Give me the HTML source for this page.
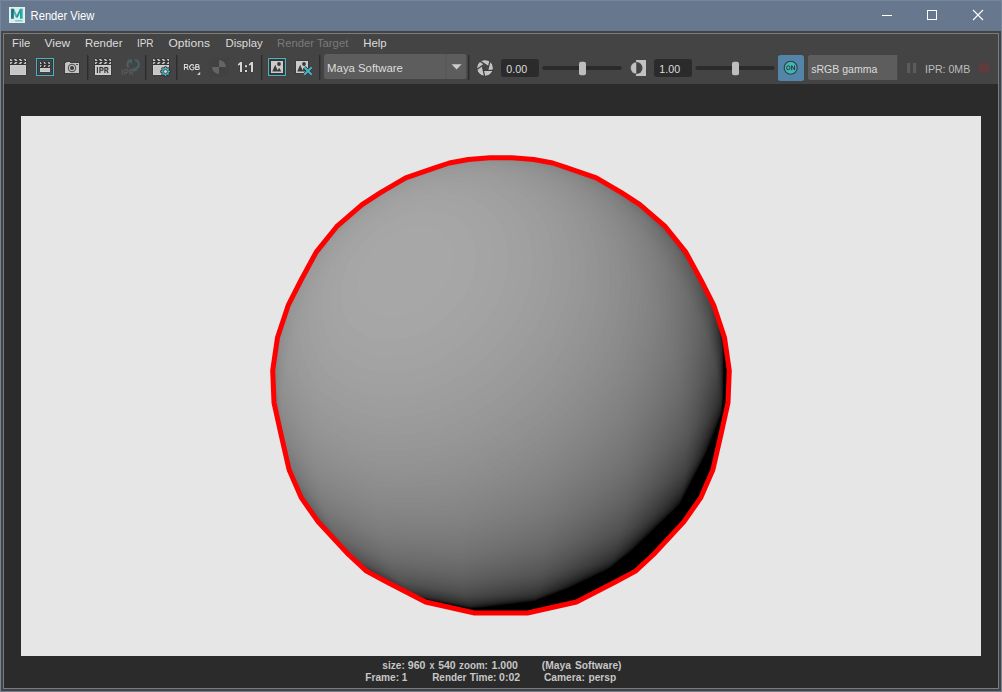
<!DOCTYPE html>
<html><head><meta charset="utf-8"><title>Render View</title>
<style>
html,body{margin:0;padding:0;}
body{width:1002px;height:692px;overflow:hidden;background:#67778d;font-family:"Liberation Sans",sans-serif;position:relative;}
.abs{position:absolute;}
#win{position:absolute;left:0;top:0;width:1002px;height:692px;background:#67778d;box-sizing:border-box;border:1px solid #75859c;border-bottom-color:#6c7c92;}
#client{position:absolute;left:1px;top:31px;width:1000px;height:660px;background:#444;}
#frame{position:absolute;left:3px;top:33px;width:996px;height:656px;box-sizing:border-box;border:1px solid #7b7b7b;background:#444;}
#view{position:absolute;left:4px;top:84px;width:994px;height:604px;background:#2b2b2b;}
</style></head><body>
<div id="win"></div>
<!-- title bar -->
<svg class="abs" style="left:9px;top:7px" width="16" height="16" viewBox="9 7 16 16">
<defs><linearGradient id="mg" x1="0" y1="0" x2="1" y2="0"><stop offset="0" stop-color="#12707a"/><stop offset="0.45" stop-color="#17868a"/><stop offset="1" stop-color="#27b6ae"/></linearGradient></defs>
<rect x="9" y="7" width="16" height="16" fill="#e8f6f4"/><rect x="9.6" y="7.6" width="14.8" height="14.8" fill="#dcebeb"/>
<path d="M11.1 18.8V8.8h2.8l3 6.4 3-6.4h2.8v10h-2.7v-5.8l-2.2 4.6h-1.8l-2.2-4.6v5.8z" fill="url(#mg)"/>
<path d="M13.9 8.8l3 6.4-.9 2.4-2.2-4.6z" fill="#9fcfd0" opacity="0.55"/>
<rect x="15.2" y="20.1" width="7.2" height="1.4" fill="#4dbfb7" opacity="0.75"/>
</svg>
<svg class="abs" style="left:880px;top:8px" width="110" height="16" viewBox="0 0 110 16" shape-rendering="crispEdges">
<rect x="2" y="7" width="10" height="1" fill="#fff"/>
<rect x="47.5" y="2.5" width="9" height="9" fill="none" stroke="#fff" stroke-width="1"/>
<path d="M93 2l10 10M103 2l-10 10" stroke="#fff" stroke-width="1.1" shape-rendering="geometricPrecision" fill="none"/>
</svg>
<div id="client"></div><div id="frame"></div>
<!-- menu -->
<!-- toolbar -->
<svg class="abs" style="left:0;top:0" width="1002" height="90" viewBox="0 0 1002 90" font-family="Liberation Sans, sans-serif">
<text x="30.6" y="19.8" font-size="12" fill="#ffffff" textLength="63.8" lengthAdjust="spacingAndGlyphs">Render View</text>
<text x="12.0" y="47.2" font-size="11" fill="#dcdcdc" textLength="18.2" lengthAdjust="spacingAndGlyphs">File</text>
<text x="44.5" y="47.2" font-size="11" fill="#dcdcdc" textLength="25.7" lengthAdjust="spacingAndGlyphs">View</text>
<text x="85.0" y="47.2" font-size="11" fill="#dcdcdc" textLength="37.5" lengthAdjust="spacingAndGlyphs">Render</text>
<text x="136.9" y="47.2" font-size="11" fill="#dcdcdc" textLength="16.7" lengthAdjust="spacingAndGlyphs">IPR</text>
<text x="168.5" y="47.2" font-size="11" fill="#dcdcdc" textLength="41.4" lengthAdjust="spacingAndGlyphs">Options</text>
<text x="225.5" y="47.2" font-size="11" fill="#dcdcdc" textLength="37.1" lengthAdjust="spacingAndGlyphs">Display</text>
<text x="277.0" y="47.2" font-size="11" fill="#7b7b7b" textLength="71.3" lengthAdjust="spacingAndGlyphs">Render Target</text>
<text x="363.2" y="47.2" font-size="11" fill="#dcdcdc" textLength="23.4" lengthAdjust="spacingAndGlyphs">Help</text>
<rect x="87" y="55" width="1.4" height="25" fill="#2d2d2d"/>
<rect x="145" y="55" width="1.4" height="25" fill="#2d2d2d"/>
<rect x="176" y="55" width="1.4" height="25" fill="#2d2d2d"/>
<rect x="261" y="55" width="1.4" height="25" fill="#2d2d2d"/>
<rect x="319" y="55" width="1.4" height="25" fill="#2d2d2d"/>
<rect x="468" y="55" width="1.4" height="25" fill="#2d2d2d"/>
<rect x="9.4" y="58.4" width="17.2" height="17.2" rx="0.8" fill="#343434"/><clipPath id="cl10_59"><rect x="10.0" y="59.0" width="16.0" height="6.0"/></clipPath><g clip-path="url(#cl10_59)" fill="#c6c6c6"><polygon points="3.90,59.00 6.20,59.00 7.80,61.00 5.50,61.00"/><polygon points="5.50,62.00 7.80,62.00 6.20,64.00 3.90,64.00"/><polygon points="8.80,59.00 11.10,59.00 12.70,61.00 10.40,61.00"/><polygon points="10.40,62.00 12.70,62.00 11.10,64.00 8.80,64.00"/><polygon points="13.70,59.00 16.00,59.00 17.60,61.00 15.30,61.00"/><polygon points="15.30,62.00 17.60,62.00 16.00,64.00 13.70,64.00"/><polygon points="18.60,59.00 20.90,59.00 22.50,61.00 20.20,61.00"/><polygon points="20.20,62.00 22.50,62.00 20.90,64.00 18.60,64.00"/><polygon points="23.50,59.00 25.80,59.00 27.40,61.00 25.10,61.00"/><polygon points="25.10,62.00 27.40,62.00 25.80,64.00 23.50,64.00"/><polygon points="28.40,59.00 30.70,59.00 32.30,61.00 30.00,61.00"/><polygon points="30.00,62.00 32.30,62.00 30.70,64.00 28.40,64.00"/></g><rect x="10.0" y="65.0" width="16.0" height="10.0" fill="#c6c6c6"/><rect x="10.4" y="65.4" width="15.2" height="9.2" fill="none" stroke="#d0d0d0" stroke-width="0.8"/>
<rect x="35.6" y="57.6" width="18.8" height="18.8" fill="#3f3838"/><rect x="36.5" y="58.5" width="17" height="17" fill="#464646" stroke="#46b4c6" stroke-width="1.1"/>
<rect x="37.5" y="59.5" width="15" height="15" fill="none" stroke="#3b3131" stroke-width="0.9"/>
<rect x="39.4" y="61.4" width="11.2" height="11.2" rx="0.8" fill="#343434"/><clipPath id="cl40_62"><rect x="40.0" y="62.0" width="10.0" height="6.0"/></clipPath><g clip-path="url(#cl40_62)" fill="#c6c6c6"><polygon points="35.00,62.00 36.44,62.00 37.44,64.00 36.00,64.00"/><polygon points="36.00,65.00 37.44,65.00 36.44,67.00 35.00,67.00"/><polygon points="39.25,62.00 40.69,62.00 41.69,64.00 40.25,64.00"/><polygon points="40.25,65.00 41.69,65.00 40.69,67.00 39.25,67.00"/><polygon points="43.50,62.00 44.94,62.00 45.94,64.00 44.50,64.00"/><polygon points="44.50,65.00 45.94,65.00 44.94,67.00 43.50,67.00"/><polygon points="47.75,62.00 49.19,62.00 50.19,64.00 48.75,64.00"/><polygon points="48.75,65.00 50.19,65.00 49.19,67.00 47.75,67.00"/><polygon points="52.00,62.00 53.44,62.00 54.44,64.00 53.00,64.00"/><polygon points="53.00,65.00 54.44,65.00 53.44,67.00 52.00,67.00"/></g><rect x="40.0" y="68.0" width="10.0" height="4.0" fill="#c6c6c6"/><rect x="40.4" y="68.4" width="9.2" height="3.2" fill="none" stroke="#d0d0d0" stroke-width="0.8"/>
<path d="M64.4 62.4h1.2v-1h5.2v1h8.8v11.2h-15.2z" fill="#343434"/>
<path d="M65 63h1.2v-1h4v1H79v10H65z" fill="#c4c4c4"/>
<circle cx="72" cy="68" r="3.8" fill="#c4c4c4" stroke="#3a3a3a" stroke-width="0.9"/><circle cx="72" cy="68" r="2" fill="#3c3c3c"/>
<rect x="76" y="64" width="2" height="1" rx="0.5" fill="#3a3a3a"/>
<rect x="94.4" y="58.4" width="17.2" height="17.2" rx="0.8" fill="#343434"/><clipPath id="cl95_59"><rect x="95.0" y="59.0" width="16.0" height="6.0"/></clipPath><g clip-path="url(#cl95_59)" fill="#c6c6c6"><polygon points="88.90,59.00 91.20,59.00 92.80,61.00 90.50,61.00"/><polygon points="90.50,62.00 92.80,62.00 91.20,64.00 88.90,64.00"/><polygon points="93.80,59.00 96.10,59.00 97.70,61.00 95.40,61.00"/><polygon points="95.40,62.00 97.70,62.00 96.10,64.00 93.80,64.00"/><polygon points="98.70,59.00 101.00,59.00 102.60,61.00 100.30,61.00"/><polygon points="100.30,62.00 102.60,62.00 101.00,64.00 98.70,64.00"/><polygon points="103.60,59.00 105.90,59.00 107.50,61.00 105.20,61.00"/><polygon points="105.20,62.00 107.50,62.00 105.90,64.00 103.60,64.00"/><polygon points="108.50,59.00 110.80,59.00 112.40,61.00 110.10,61.00"/><polygon points="110.10,62.00 112.40,62.00 110.80,64.00 108.50,64.00"/><polygon points="113.40,59.00 115.70,59.00 117.30,61.00 115.00,61.00"/><polygon points="115.00,62.00 117.30,62.00 115.70,64.00 113.40,64.00"/></g><rect x="95.0" y="65.0" width="16.0" height="10.0" fill="#c6c6c6"/><rect x="95.4" y="65.4" width="15.2" height="9.2" fill="none" stroke="#d0d0d0" stroke-width="0.8"/>
<g fill="none" stroke="#2c2c2c" stroke-width="1.05"><path d="M97.4 67.1V72.9M99.9 72.9V67.6h1.9a1.35 1.35 0 0 1 0 2.7h-1.9M104.9 72.9V67.6h1.8a1.3 1.3 0 0 1 0 2.6h-1.8M106.6 70.3l1.5 2.6"/></g>
<g fill="none" stroke="#486166" stroke-width="2.2"><path d="M128.6 67.5a3.6 3.8 0 0 1 1.6 -6.6"/><path d="M134.9 60.2a3.8 4 0 0 1 -0.3 8.6"/></g>
<path d="M127 59.4h5v4.6z" fill="#486166"/><path d="M132.4 67.2l5.2 3.6h-5.2z" fill="#486166" transform="translate(0.6,0.2)"/>
<g fill="none" stroke="#5b5b5b" stroke-width="1.05"><path d="M122.3 69.1V75M124.8 75V69.6h1.9a1.4 1.4 0 0 1 0 2.8h-1.9M129.9 75V69.6h1.8a1.35 1.35 0 0 1 0 2.7h-1.8M131.6 72.4l1.5 2.6"/></g>
<rect x="152.4" y="58.4" width="17.2" height="17.2" rx="0.8" fill="#343434"/><clipPath id="cl153_59"><rect x="153.0" y="59.0" width="16.0" height="6.0"/></clipPath><g clip-path="url(#cl153_59)" fill="#c6c6c6"><polygon points="146.90,59.00 149.20,59.00 150.80,61.00 148.50,61.00"/><polygon points="148.50,62.00 150.80,62.00 149.20,64.00 146.90,64.00"/><polygon points="151.80,59.00 154.10,59.00 155.70,61.00 153.40,61.00"/><polygon points="153.40,62.00 155.70,62.00 154.10,64.00 151.80,64.00"/><polygon points="156.70,59.00 159.00,59.00 160.60,61.00 158.30,61.00"/><polygon points="158.30,62.00 160.60,62.00 159.00,64.00 156.70,64.00"/><polygon points="161.60,59.00 163.90,59.00 165.50,61.00 163.20,61.00"/><polygon points="163.20,62.00 165.50,62.00 163.90,64.00 161.60,64.00"/><polygon points="166.50,59.00 168.80,59.00 170.40,61.00 168.10,61.00"/><polygon points="168.10,62.00 170.40,62.00 168.80,64.00 166.50,64.00"/><polygon points="171.40,59.00 173.70,59.00 175.30,61.00 173.00,61.00"/><polygon points="173.00,62.00 175.30,62.00 173.70,64.00 171.40,64.00"/></g><rect x="153.0" y="65.0" width="16.0" height="10.0" fill="#c6c6c6"/><rect x="153.4" y="65.4" width="15.2" height="9.2" fill="none" stroke="#d0d0d0" stroke-width="0.8"/>
<polygon points="165.06,67.02 165.94,67.02 166.46,68.34 167.06,68.59 168.35,68.02 168.98,68.65 168.41,69.94 168.66,70.54 169.98,71.06 169.98,71.94 168.66,72.46 168.41,73.06 168.98,74.35 168.35,74.98 167.06,74.41 166.46,74.66 165.94,75.98 165.06,75.98 164.54,74.66 163.94,74.41 162.65,74.98 162.02,74.35 162.59,73.06 162.34,72.46 161.02,71.94 161.02,71.06 162.34,70.54 162.59,69.94 162.02,68.65 162.65,68.02 163.94,68.59 164.54,68.34" fill="#42b4c6" stroke="#363030" stroke-width="1.6" stroke-linejoin="round" paint-order="stroke"/>
<circle cx="165.5" cy="71.5" r="1.9" fill="#dcdcdc" stroke="#3a3434" stroke-width="0.8"/>
<path d="M184.4 70V64.5h2.1a1.45 1.45 0 0 1 0 2.9h-2.1M186.6 67.5l1.8 2.5M193.8 65.6a2.3 2.65 0 1 0 .2 3.1V67.3h-1.9M195.7 64.5V69.5h2.3a1.3 1.3 0 0 0 0-2.6h-2.3M195.7 64.5h2.1a1.2 1.2 0 0 1 0 2.4" fill="none" stroke="#363636" stroke-width="2.2"/><path d="M184.4 70V64.5h2.1a1.45 1.45 0 0 1 0 2.9h-2.1M186.6 67.5l1.8 2.5M193.8 65.6a2.3 2.65 0 1 0 .2 3.1V67.3h-1.9M195.7 64.5V69.5h2.3a1.3 1.3 0 0 0 0-2.6h-2.3M195.7 64.5h2.1a1.2 1.2 0 0 1 0 2.4" fill="none" stroke="#dcdcdc" stroke-width="1.1"/>
<path d="M197 75h3.2v-3.2z" fill="#cfcfcf"/>
<rect x="209" y="57.5" width="20" height="19.5" fill="#424242"/><circle cx="219" cy="67" r="7" fill="#414141"/>
<path d="M219 67V60a7 7 0 0 1 7 7z" fill="#646464"/><path d="M219 67v7a7 7 0 0 1 -7 -7z" fill="#646464"/>
<g fill="#d6d6d6" stroke="#353535" stroke-width="0.7" paint-order="stroke"><path d="M237.9 64.3l2.3-2.3h1.8v10h-2v-7.3l-2.1 1z"/><path d="M248.9 64.3l2.3-2.3h1.8v10h-2v-7.3l-2.1 1z"/><rect x="245" y="65.2" width="2" height="2"/><rect x="245" y="70" width="2" height="2"/></g>
<rect x="267.5" y="57.5" width="19" height="19" fill="#3a3333"/><rect x="268.5" y="58.5" width="17" height="17" fill="#3b3333" stroke="#46b4c6" stroke-width="1.1"/>
<rect x="270.4" y="60.4" width="13.2" height="13.2" fill="#353535"/><rect x="271" y="61" width="12" height="12" fill="#cbcbcb"/><path d="M272.2 71.6L275.2 64.8L277.6 70.2L279.1 67.8L281.4 71.6z" fill="#3b3b3b"/><circle cx="279.0" cy="64.0" r="1.9" fill="#3b3b3b"/>
<rect x="295.4" y="60.4" width="13.2" height="13.2" fill="#353535"/><rect x="296" y="61" width="12" height="12" fill="#cbcbcb"/><path d="M297.2 71.6L300.2 64.8L302.6 70.2L304.1 67.8L306.4 71.6z" fill="#3b3b3b"/><circle cx="304.0" cy="64.0" r="1.9" fill="#3b3b3b"/>
<path d="M304.3 67.3l7.4 7.4M311.7 67.3l-7.4 7.4" stroke="#3a3232" stroke-width="3.4" fill="none"/>
<path d="M304.3 67.3l7.4 7.4M311.7 67.3l-7.4 7.4" stroke="#45b5c7" stroke-width="2" fill="none"/>
<rect x="324" y="54" width="142.4" height="25" rx="2.5" fill="#5d5d5d"/>
<rect x="445.4" y="54" width="1" height="25" fill="#555"/>
<path d="M451.6 64.2h10l-5 5.2z" fill="#cdcdcd"/>
<text x="327.1" y="71.6" font-size="11" fill="#dcdcdc" textLength="75.8" lengthAdjust="spacingAndGlyphs">Maya Software</text>
<circle cx="485" cy="68" r="8.3" fill="#c4c4c4" stroke="#3a3a3a" stroke-width="0.9"/>
<polygon points="3,-1.7 2.6,2.4 -1.85,2.5 -2.5,-1.4 -1.05,-3.4" transform="translate(485,68)" fill="#444"/>
<g transform="translate(485,68)" stroke="#3c3c3c" stroke-width="1.25" fill="none"><path d="M-4.7 -6.6L3 -1.7M4.9 -6.6L2.6 2.4M8.3 2.3L-1.85 2.5M-0.4 8.3L-2.5 -1.4M-8.25 1.5L-1.05 -3.4"/></g>
<rect x="501" y="59" width="38" height="18" rx="3" fill="#2b2b2b"/>
<text x="506.3" y="72.8" font-size="11" fill="#dcdcdc" textLength="20.8" lengthAdjust="spacingAndGlyphs">0.00</text>
<rect x="654" y="59" width="38" height="18" rx="3" fill="#2b2b2b"/>
<text x="659.3" y="72.8" font-size="11" fill="#dcdcdc" textLength="20.8" lengthAdjust="spacingAndGlyphs">1.00</text>
<rect x="542.2" y="66" width="79.6" height="4" rx="2" fill="#2b2b2b"/>
<rect x="579.0" y="61.8" width="7" height="13.4" rx="2" fill="#bebebe"/>
<rect x="695.4" y="66" width="79.2" height="4" rx="2" fill="#2b2b2b"/>
<rect x="732.0" y="61.8" width="7" height="13.4" rx="2" fill="#bebebe"/>
<rect x="636" y="60" width="10" height="16" fill="#c2c2c2"/>
<path d="M636.5 62a6 6 0 0 0 0 12z" fill="#c2c2c2" stroke="#444" stroke-width="0.5"/>
<path d="M636.5 62a6 6 0 0 1 0 12z" fill="#444"/>
<rect x="778" y="55" width="26" height="26" rx="2.5" fill="#5285a7"/>
<circle cx="790.7" cy="67.8" r="6.5" fill="#41b6b8" stroke="#353b3f" stroke-width="1.1"/>
<g fill="none" stroke="#2c393e" stroke-width="1"><ellipse cx="788.3" cy="67.8" rx="1.75" ry="1.95"/><path d="M791.7 70.2V65.6l2.9 4.4V65.4"/></g>
<path d="M810.5 55H897.3V80H810.5a2.5 2.5 0 0 1-2.5-2.5v-20a2.5 2.5 0 0 1 2.5-2.5z" fill="#5d5d5d"/>
<text x="811.2" y="72.8" font-size="11" fill="#dcdcdc" textLength="66.2" lengthAdjust="spacingAndGlyphs">sRGB gamma</text>
<rect x="907" y="63" width="3.2" height="10" fill="#5b5b5b"/><rect x="913" y="63" width="3.2" height="10" fill="#5b5b5b"/>
<text x="925" y="73" font-size="11" fill="#bdbdbd" textLength="45.2" lengthAdjust="spacingAndGlyphs">IPR: 0MB</text>
<rect x="979" y="63" width="10" height="10" fill="#5f3b3b"/>
</svg>
<div id="view"></div>
<svg class="abs" style="left:21px;top:116px" width="960" height="540" viewBox="0 0 960 540">
<rect width="960" height="540" fill="#e6e6e6"/>
<defs><clipPath id="sc"><polygon points="256.5,221.5 267.4,188.8 280.1,164.0 295.2,136.1 315.6,110.7 341.1,88.6 359.5,76.6 384.7,61.8 413.7,51.8 428.3,47.0 447.2,43.5 468.8,41.8 491.2,41.8 512.8,43.5 531.7,47.0 546.3,51.8 575.3,61.8 600.5,76.6 618.9,88.6 644.4,110.7 664.8,136.1 679.9,164.0 692.6,188.8 703.5,221.5 708.3,254.5 707.0,286.7 700.2,317.4 691.9,353.8 679.6,381.9 662.8,405.9 632.5,438.5 614.5,455.1 594.2,466.0 555.4,486.0 506.4,497.0 453.6,497.0 404.6,486.0 365.8,466.0 345.5,455.1 327.5,438.5 297.2,405.9 280.4,381.9 268.1,353.8 259.8,317.4 253.0,286.7 251.7,254.5"/></clipPath></defs>
<g clip-path="url(#sc)" shape-rendering="geometricPrecision">
<rect x="241" y="30" width="478" height="478" fill="#000000"/>
<path fill="#020202" d="M385.5 508l-6 0.4 -138 0.1 -1-1 0-477 1-1 477 0 1 1 -0.3 182 -0.7 1 -13 4.2 -1 0.5 -1.2 1.3 -0.1 1 1 2 -0.7 2 -0.4 57 -2.3 18 -14.5 37 -26.9 52 -1.9 2.2 -46 44.2 -21 17 -3 2.2 -38 18.1 -36 13.7 -53 6.5 -12 0.6 -42.3-8.5 -3.7-0.6 -2 0.3 -1-0.7 -1.3 1 -10.4 21z"/>
<path fill="#040404" d="M385.5 507.7l-1 0.5 -5 0.2 -138 0.1 -1-1 0-477 1-1 477 0 1 1 -0.1 165 -0.4 17 -0.5 0.8 -2 0.2 -1 0.8 -2 0.2 -1 0.8 -2 0.2 -1 0.8 -2 0.2 -1 0.8 -1.7 0.2 -1.8 2 -0.3 1 0.9 2 -0.9 59 -1.3 13 -1.2 6 -14.2 36 -26.9 52 -48.6 46.9 -22 17.7 -42 20.1 -32 12.1 -4 0.8 -5.6 0.4 -2.4 0.6 -5.9 0.4 -3.1 0.7 -5.2 0.3 -2.8 0.7 -5.5 0.3 -2.5 0.6 -5.8 0.4 -12.2 1.7 -10 0.5 -3-0.4 -43.7-8.8 -2.3 0.2 -1-0.4 -1.7 1.2 -10.4 21z"/>
<path fill="#050505" d="M384.5 508.1l-143 0.3 -0.9-0.9 -0.1-477 1-1 477 0.1 0.9 0.9 0 165 -0.1 13 -0.4 4 -0.4 0.5 -2 0.3 -1 0.7 -2 0.3 -1 0.7 -2 0.3 -1 0.7 -2 0.3 -1 0.7 -2 0.3 -1.8 2.2 -0.2 1.4 0.7 1.6 0 7 -0.7 52 -1.3 13 -0.7 2.4 -0.2 2.6 -14.1 36 -27.4 53 -48.3 46.6 -21 16.9 -3 2 -38 18.1 -34 13.1 -55 6.8 -10 0.4 -3-0.2 -42.5-8.7 -4.5-0.4 -2 1.4 -10.3 21z"/>
<path fill="#070707" d="M384.5 508l-7 0.3 -136 0.1 -0.9-0.9 -0.1-477 1-1 477 0.1 0.9 0.9 0 162 -0.2 16 -0.3 3 -0.4 1.3 -2 0.2 -1 0.8 -2 0.2 -1 0.8 -2 0.2 -1 0.8 -2 0.2 -1 0.8 -2 0.3 -2.1 2.4 0.7 9 -0.7 53 -1.4 13 -0.8 5 -14.2 36 -27.4 53 -48.1 46.4 -20 16.2 -4 2.7 -38 18.1 -35 13.3 -55 6.7 -11 0.3 -42.8-8.7 -5.2-0.7 -2.2 1.7 -10.2 21z"/>
<path fill="#080808" d="M384.5 507.9l-7 0.4 -136 0.1 -0.9-0.9 0-477 0.9-0.9 477 0 0.9 0.9 -0.1 162 -0.1 16 -0.4 3 -0.3 1 -2 0.3 -1 0.7 -2 0.3 -1 0.7 -2 0.3 -1 0.7 -2 0.3 -1 0.7 -2 0.3 -2.2 2.7 0.6 9 -0.6 53 -2.3 18 -14.1 36 -27.4 52.8 -48 46.4 -20 16.2 -3 2.2 -40 19 -34 13 -56 6.7 -9 0.4 -49-9.6 -2.4 1.9 -10.2 21z"/>
<path fill="#0a0a0a" d="M384.5 507.8l-7 0.5 -136 0.1 -0.9-0.9 0-477 0.9-0.9 477 0 0.9 0.9 -0.1 162 -0.2 16 -0.5 3 -0.1 0.5 -1 0.4 -13 4.2 -2.3 2.9 0.6 9 -0.6 53 -2.3 18 -14.2 36 -27.2 52.6 -48 46.4 -22 17.7 -41 19.8 -34 13 -49 6 -12 1 -4 0.1 -49-9.6 -2.5 2 -10.3 21z"/>
<path fill="#0b0b0b" d="M384.5 507.7l-2 0.4 -5 0.1 -136 0.2 -0.9-0.9 0-477 0.9-0.9 477 0 0.9 0.9 -0.4 178 -0.5 2.8 -2 0.3 -1.5 0.9 -1.5 0.1 -1.5 0.9 -1.5 0.1 -1.5 0.9 -1.5 0.1 -1.5 0.9 -1.5 0.1 -2.4 3.9 0.5 9 -0.5 53 -2.4 18 -14.6 37 -26.6 51.4 -48.2 46.6 -21.8 17.6 -41 19.7 -34 13.1 -49 5.9 -13 1.2 -3 0 -49-9.6 -1.8 1.1 -0.9 1 -10.3 21z"/>
<path fill="#0d0d0d" d="M384.5 507.6l-2 0.5 -5 0.1 -136 0.1 -0.8-0.8 -0.1-477 0.9-0.9 477 0 0.9 0.9 -0.1 151 -0.3 27 -0.5 1.8 -1 0.6 -14 4.4 -1 1.2 0.6 1 -1.1 2 0 1 0.5 8 -0.5 53 -2.1 17 -14.9 38 -26.5 51.1 -2.6 2.9 -45.8 44 -21.6 17.4 -41 19.8 -34 13 -49 6 -13 1.2 -3 0 -49-9.6 -2.1 1.2 -0.8 1 -10.4 21z"/>
<path fill="#0e0e0e" d="M383.5 507.8l-6 0.4 -33-0.3 -103 0.4 -0.8-0.8 -0.1-477 0.9-0.9 477 0.1 0.8 0.8 0 151 -0.4 27 -0.4 1.4 -1 0.5 -1.2 0.1 -1.8 0.9 -1.2 0.1 -1.8 0.9 -1.2 0.1 -1.8 0.9 -4.2 1.1 -0.8 0.4 -1.4 1.6 0.6 1 -0.8 2 0.5 10 -0.4 52 -2.2 17 -15 38 -26.3 50.9 -2.8 3.1 -45.8 44 -21.4 17.3 -41 19.8 -34 13 -49 6 -13 1.2 -3 0 -49-9.6 -2.5 1.3 -11.1 22 -1.4 2z"/>
<path fill="#101010" d="M383.5 507.7l-6 0.4 -33-0.2 -4 0.3 -99 0.1 -0.8-0.8 -0.1-477 0.9-0.9 477 0.1 0.8 0.8 -0.1 151 -0.4 27 -0.3 1 -1 0.7 -2 0.3 -1 0.7 -2 0.3 -1 0.7 -2 0.3 -1 0.7 -2 0.3 -1 0.7 -2 0.3 -1.7 2 0.4 1 -0.4 2 0.5 10 -0.4 52 -2.3 17 -14.9 38 -26.2 50.7 -2.9 3.3 -45.8 44 -21.3 17.2 -41.2 19.8 -33.8 13 -50 6.1 -13 1.1 -2 0 -49-9.6 -2.9 1.4 -11.1 22 -1.2 2z"/>
<path fill="#111111" d="M383.5 507.7l-6 0.4 -33-0.3 -4 0.3 -99 0.2 -0.8-0.8 -0.1-477 0.9-0.9 477 0.1 0.8 0.8 -0.1 151 -0.4 27 -0.3 0.8 -1 0.8 -2 0.2 -1 0.8 -2 0.2 -1 0.8 -2 0.2 -1 0.8 -2 0.2 -1 0.8 -2 0.2 -2 2.2 0.4 2 -0.2 1 0.5 10 -0.4 51 -1 10 -1.3 8 -14.9 38 -26.1 50.4 -3.1 3.6 -45.8 44 -21.1 17 -41.5 20 -33.5 12.9 -50.3 6.1 -12.7 1.1 -6-0.8 -43-8.5 -2-0.3 -2 0.5 -1.3 1 -11 22 -1.2 2z"/>
<path fill="#131313" d="M383.5 507.6l-6 0.5 -33-0.3 -4 0.3 -99 0.2 -0.8-0.8 -0.1-477 0.9-0.9 477 0.1 0.8 0.8 -0.1 151 -0.5 27 -1.2 1.4 -2 0.2 -1 0.8 -2 0.2 -1 0.8 -2 0.2 -1 0.8 -2 0.2 -1 0.8 -2 0.2 -2.1 2.4 0.7 13 -0.4 51 -0.9 10 -1.3 7.7 -15 38.2 -26 50.3 -3.3 3.8 -44.7 43 -21 17.1 -3 2 -39.9 18.9 -33.1 12.7 -51.4 6.3 -11.6 1.1 -6-0.8 -43-8.6 -2-0.2 -2 0.2 -1.6 1.3 -10.5 21z"/>
<path fill="#141414" d="M383.5 507.5l-6 0.5 -33-0.3 -4 0.4 -87 0.2 -12 0 -0.8-0.8 -0.1-477 0.9-0.9 477 0.1 0.8 0.8 -0.1 151 -0.5 27 -1.2 1.2 -2 0.3 -1 0.7 -2 0.3 -1 0.7 -2 0.3 -1 0.7 -2 0.3 -1 0.7 -2 0.3 -2.3 2.5 0.8 13 -0.4 51 -0.8 9 -1.3 8.2 -15 38.4 -26 50.3 -4.6 5.1 -43.7 42 -20.7 17 -3.2 2 -40 19 -32.8 12.6 -52.4 6.4 -10.6 0.9 -6-0.7 -43-8.5 -4-0.2 -1.9 1.5 -10.3 21z"/>
<path fill="#161616" d="M382.5 507.8l-141 0.4 -0.7-0.7 -0.2-477 0.9-0.9 477 0.1 0.8 0.8 -0.2 151 -0.5 27 -1.1 1 -2 0.3 -1 0.7 -2 0.3 -1 0.7 -2 0.3 -1 0.7 -2 0.3 -1 0.7 -2 0.3 -2.4 2.7 0.9 13 -0.4 51 -0.9 9 -1.2 7.6 -15 38.6 -26 50.4 -5.8 6.4 -43.8 42 -19.4 15.8 -3.5 2.2 -40.1 19 -32.4 12.5 -53.5 6.5 -9.5 0.8 -6-0.7 -42-8.3 -5-0.6 -2.1 1.8 -11.3 23 -0.7 1z"/>
<path fill="#171717" d="M382.5 507.7l-8 0.3 -30-0.4 -4 0.4 -99 0.2 -0.7-0.7 -0.1-477 0.8-0.8 477 0.1 0.7 0.7 -0.1 151 -0.6 27 -1.7 1 -1.3 0.1 -1.7 0.9 -1.3 0.1 -1.7 0.9 -1.3 0.1 -1.7 0.9 -4.3 1.1 -2.5 2.9 0.9 13 -0.4 51 -0.8 9 -1.2 7 -1 3.3 -15 37.8 -25 48.2 -6 6.7 -43.8 42 -18.4 15 -4.7 3 -40.1 19 -32 12.3 -54.8 6.7 -8.2 0.7 -6-0.7 -42-8.3 -5-0.7 -2.3 2 -11.2 23 -0.8 1z"/>
<path fill="#191919" d="M382.5 507.7l-8 0.3 -30-0.4 -4 0.4 -99 0.2 -0.7-0.7 -0.1-477 0.8-0.8 477 0.1 0.7 0.7 -0.1 151 -0.6 26.7 -15 5 -1 0.7 -1.7 2.6 1 13 -0.4 51 -0.8 9 -1.1 6.5 -1 3.4 -15 37.9 -25 48.2 -6.3 7 -43.7 42 -19 15.5 -4.3 2.5 -42.4 20 -29.3 11.2 -63 7.4 -5.5-0.6 -47.5-9.1 -2.4 2.1 -11.3 23z"/>
<path fill="#1a1a1a" d="M382.5 507.6l-8 0.3 -25-0.4 8.2-17 0.8-1 0.2-1 0.8-1 0.2-1 0.8-1 0.2-1 0.8-1 0.2-1 0.8-1 0.2-1 0.8-1 0.2-1 0.8-1 0.2-1 0.8-1 0.2-1 0.8-1 0-1.2 -2 2.1 -0.2 1.1 -1.8 1.9 -0.2 1.1 -1.8 1.9 -0.2 1.1 -1.8 1.9 -0.2 1.1 -1.8 1.9 -1.2 3.1 -1.8 1.9 -1.2 3.1 -1.8 1.9 -1.2 3.1 -1.8 1.9 -1.2 3.1 -1.8 1.9 -0.2 1.1 -3.8 0.5 -87 0.2 -12 0 -0.7-0.7 -0.1-477 0.8-0.8 477 0.1 0.7 0.7 -0.1 151 -0.6 25.9 -2 1 -2 0.3 -1 0.7 -2 0.3 -1 0.7 -2 0.3 -1 0.7 -2 0.3 -1 0.7 -1.3 0.1 -1.1 1 -1.4 3 1 13 -0.4 51 -0.8 9 -1 6 -1 3.4 -15 38 -25 48.2 -6.6 7.4 -43.7 42 -18.7 15.3 -4.8 2.7 -42.3 20 -28.9 11.1 -63 7.3 -5-0.4 -48-9.2 -2.6 2.2 -11.2 23z"/>
<path fill="#1c1c1c" d="M382.5 507.6l-8 0.3 -23.9-0.4 18-36 0.6-2 -0.7-0.1 -4.1 4.1 -2.4 4 -1.6 2 -0.4 1 -3.6 5 -1.4 3 -1.6 2 -1.4 3 -1.6 2 -1.4 3 -1.6 2 -1.4 3 -1.7 2 -1 2 -2.8 0.4 -87 0.3 -12 0 -0.7-0.7 -0.1-477 0.8-0.8 477 0.1 0.7 0.7 -0.1 151 -0.6 24.9 -5 2 -1.4 0.1 -1.6 0.9 -1.4 0.1 -1.6 0.9 -1.4 0.1 -1.6 0.9 -1.3 0.1 -2.1 2 -0.5 3 1 14 -0.4 50 -0.7 8.5 -1 5.9 -1 3.5 -15 38.1 -22 43 -3 5.3 -6.9 7.7 -43.7 42 -18.4 15.1 -3.2 1.9 -44.3 21 -28.5 10.9 -50 6.1 -14 1.4 -3.5-0.4 -48.5-9.3 -2.7 2.3 -11.3 23z"/>
<path fill="#1d1d1d" d="M382.5 507.5l-8 0.4 -23.3-0.4 18-36 0.6-2 -0.3-0.5 -1 0.1 -4.4 4.4 -8 12 -2 4 -1 1 -2 4 -1 1 -7 12 -2.6 0.4 -87 0.3 -12 0 -0.7-0.7 -0.1-477 0.8-0.8 477 0.1 0.7 0.7 -0.2 151 -0.5 24.6 -1 0.2 -1 0.7 -2 0.3 -1 0.7 -2 0.3 -1 0.7 -2 0.3 -1 0.7 -2 0.3 -1 0.7 -2 0.3 -2 2.2 1.1 17 -0.5 50 -0.6 7.9 -1 5.8 -1 3.6 -16 40.5 -21 40.8 -3 5.2 -7.2 8.2 -44.8 43 -17 13.9 -48 23.1 -28 10.7 -64 7.6 -8.2-1.3 -43.8-8.4 -2 1.3 -0.9 1.1z"/>
<path fill="#1f1f1f" d="M381.5 507.6l-29.4-0.1 18-36 0.3-1 -0.9-2 -1 0.3 -4.6 4.7 -8 12 -1.5 3 -1.5 2 -1.5 3 -1.5 2 -1.5 3 -1.5 2 -4.1 7 -2.3 0.4 -87 0.2 -12 0 -0.6-0.6 -0.2-477 0.8-0.8 477 0.1 0.7 0.7 -0.1 128 -0.6 47.3 -1 0.1 -1 0.8 -2 0.2 -1 0.8 -2 0.2 -1 0.8 -2 0.2 -1 0.8 -2 0.2 -1 0.8 -2 0.2 -2.2 2.6 1.1 15 0 9 -0.5 44 -0.4 6.2 -1 5.8 -1 3.7 -16 40.6 -21 41 -3 5.1 -8.6 9.6 -42.7 41 -5.5 5 -11.2 8.9 -3.3 2.1 -46.3 22 -27.4 10.5 -64 7.6 -7.5-1.1 -44.5-8.5 -2.5 1.5 -12.5 24.9z"/>
<path fill="#202020" d="M381.5 507.6l-7 0.2 -21.1-0.3 17.8-35 0.4-2 -2.1-2.2 -1 0.3 -4.9 4.9 -2.3 4 -1.7 2 -0.3 1 -1.7 2 -0.3 1 -1.7 2 -1.3 3 -1.7 2 -1.3 3 -1.7 2 -1.3 3 -1.7 2 -1.3 3 -1.7 2 -1 2 -2.1 0.3 -87 0.3 -12 0 -0.6-0.6 -0.2-477 0.8-0.8 477 0.2 0.6 0.6 0 128 -0.6 47 -7 2.1 -1.8 0.9 -1.2 0.1 -1.8 0.9 -1.2 0.1 -1.8 0.9 -1.2 0.1 -2.4 2.9 1.2 15 0 6 -0.5 47 -0.3 5.5 -1 5.8 -1 3.8 -17 42.9 -22 42.5 -7.1 8.5 -4.9 5 -42.8 41 -13.3 11 -4.8 3 -46.3 22 -14.9 6 -11.9 4.3 -64 7.7 -12.2-2 -39.8-7.6 -2.9 1.6 -12.1 24.2 -0.5 0.8z"/>
<path fill="#222222" d="M381.5 507.5l-7 0.3 -18.7-0.3 17-34 0.5-2 -2.2-2 -0.6-0.1 -1-1.4 -1 0.4 -5 5.1 -0.3 1 -3.7 5 -0.3 1 -1.8 2 -0.2 1 -1.8 2 -1.2 3 -1.8 2 -1.2 3 -1.8 2 -1.2 3 -1.8 2 -1.2 3 -1.8 2 -1 2 -1.9 0.3 -87 0.3 -12 0 -0.6-0.6 -0.2-477 0.8-0.8 477 0.2 0.6 0.6 -0.1 128 -0.5 45.9 -1.6 0.1 -1.4 0.9 -1.6 0.1 -1.4 0.9 -1.6 0.1 -1.4 0.9 -1.6 0.1 -1.4 0.9 -1.6 0.1 -1.4 0.9 -1.5 0.1 -0.9 1 -1.3 3 1.2 14 0.2 7 -0.5 47 -0.2 4.6 -1 6 -1 3.8 -17 43.1 -22 42.5 -8.5 10 -5 5 -41.6 40 -13.3 11 -5.2 3 -48.4 23 -23.4 9 -64.6 7.8 -6.1-0.8 -45.9-8.7 -2 0.6 -1.4 1.1z"/>
<path fill="#232323" d="M380.5 507.6l-22.4-0.1 16.8-33 0.4-2 -3.8-3.1 -1-0.2 -1-1.4 -1 0.5 -5.1 5.2 -0.3 1 -1.8 2 -0.2 1 -1.8 2 -0.2 1 -1.8 2 -0.2 1 -1.8 2 -1.2 3 -1.8 2 -1.2 3 -1.8 2 -1.2 3 -1.8 2 -1.2 3 -1.8 2 -1 2 -1.8 0.3 -87 0.3 -12 0 -0.6-0.6 -0.2-477 0.8-0.8 477 0.2 0.6 0.6 -0.1 128 -0.5 44.8 -2 0.2 -1 0.8 -2 0.2 -1 0.8 -2 0.2 -1 0.8 -2 0.2 -1 0.8 -2 0.2 -1 0.8 -1.9 0.2 -1.7 2 -0.3 3 1.3 14 0.2 7 -0.5 47 -1.1 9.9 -1 3.7 -18 45.5 -21 40.4 -8.9 10.5 -5 5 -42.7 41 -12.2 10 -3.4 2 -50.5 24 -20.3 8 -3 0.9 -64 7.7 -10.9-1.6 -39.1-7.5 -2-0.3 -2 0.3 -1.9 1.5 -12.3 25z"/>
<path fill="#252525" d="M380.5 507.6l-19.3-0.1 16.2-33 0.1-1 -1-0.5 -3-2.6 -1-0.1 -1-1.2 -1 0 -1-1.5 -1 0.6 -5.3 5.3 -0.2 1 -1.8 2 -0.2 1 -1.8 2 -0.2 1 -1.8 2 -0.2 1 -1.8 2 -1.2 3 -1.8 2 -1.2 3 -1.8 2 -1.2 3 -1.8 2 -1.2 3 -1.8 2 -1 2 -88.7 0.6 -12 0 -0.6-0.6 -0.2-477 0.8-0.8 477 0.2 0.6 0.6 -0.1 128 -0.5 44.3 -2 0.3 -1 0.7 -2 0.3 -1 0.7 -2 0.3 -1 0.7 -2 0.3 -1 0.7 -2 0.3 -1 0.7 -2 0.3 -2.1 2.4 1.6 23 -0.5 48 -1 9.3 -1 3.6 -18 45.6 -21 40.4 -13.3 15.1 -43.7 42 -11 9.1 -5 2.9 -50.4 24 -21.6 8.4 -65 7.9 -4.3-0.3 -44.7-8.4 -5-0.5 -2.2 1.9 -12.3 25z"/>
<path fill="#262626" d="M380.5 507.5l-14.5 0 15-30 0.2-1 -1.7-2.2 -3-1.9 -1-1 -1-0.1 -1-1.2 -1 0 -1-1.3 -1 0.1 -1-1.5 -6.4 6.1 -0.2 1 -1.8 2 -0.2 1 -1.8 2 -0.2 1 -1.8 2 -0.2 1 -1.8 2 -1.2 3 -1.8 2 -1.2 3 -1.8 2 -1.2 3 -1.8 2 -1.2 3 -1.8 2 -0.2 1 -0.8 1 -88.6 0.6 -12-0.1 -0.5-0.5 -0.2-477 0.7-0.7 477 0.1 0.6 0.6 -0.1 128 -0.5 43.7 -2 0.4 -1.7 0.9 -1.3 0.1 -1.7 0.9 -1.3 0.1 -1.7 0.9 -1.3 0.1 -1.7 0.9 -1.3 0.1 -1.7 0.9 -1.3 0.1 -2.4 2.9 1.7 23 -0.4 47 -0.9 9.7 -1 3.4 -19 47.9 -20 38.3 -13.8 15.7 -44.8 43 -9.4 7.8 -3.7 2.2 -52.5 25 -20.8 8.2 -66 8 -19.2-3.2 -28.8-5.6 -5-0.5 -2.5 2.1z"/>
<path fill="#282828" d="M379.5 507.6l-9.1-0.1 14.8-30 -5.7-4 -1-0.1 -1-1.1 -1-0.1 -1-1.1 -1 0 -1-1.3 -1 0.2 -1-1.4 -1 0.2 -1-1.5 -1 0.6 -5.5 5.6 -0.2 1 -1.8 2 -0.2 1 -1.8 2 -0.2 1 -1.8 2 -0.2 1 -1.8 2 -1.2 3 -1.8 2 -1.2 3 -1.8 2 -1.2 3 -1.8 2 -1.2 3 -1.8 2 -0.2 1 -0.8 1 -88.5 0.5 -12 0 -0.5-0.5 -0.2-477 0.7-0.7 477 0.1 0.6 0.6 -0.1 128 -0.5 41.9 -1 0.6 -2 0.4 -1 0.6 -2 0.4 -1 0.6 -2 0.4 -1 0.6 -8 2.4 -1 1.1 0.2 1 -0.9 2 1.7 17.4 0.2 6.6 -0.4 46 -0.8 8.9 -2 5.9 -18 45.6 -17 33.2 -3 5.1 -15.3 17.3 -43.8 42 -8.9 7.5 -4.5 2.5 -52.5 25 -6.9 3 -13.1 4.9 -66 8.1 -53-9.3 -2.8 2.3 -12.2 24.8z"/>
<path fill="#292929" d="M379.5 507.5l-8.5 0 14.8-30 -0.3-1 -1-0.1 -1-1 -1-0.1 -1-0.9 -1-0.1 -1-1.1 -1 0 -1-1.2 -1 0 -1-1.2 -1 0.1 -1-1.4 -1 0.3 -0.9-1.3 -1.1 0.1 -1-1.4 -1 0.6 -5.6 5.7 -0.2 1 -1.8 2 -0.2 1 -1.8 2 -0.2 1 -1.8 2 -0.2 1 -1.8 2 -1.2 3 -1.8 2 -1.2 3 -1.8 2 -1.2 3 -1.8 2 -1.2 3 -1.8 2 -0.3 1 -0.7 1 -10.9 0 22.5-44.9 0-1.1 -4.1 4 -0.2 1 -1.8 2 -0.2 1 -1.8 2 -0.2 1 -3.8 5 -1.2 3 -1.8 2 -1.2 3 -1.8 2 -1.2 3 -1.8 2 -1.2 3 -1.8 2 -1.2 3 -1.8 2 -1.2 3 -1.8 2 -69.9 0.5 -12 0 -0.5-0.5 -0.2-477 0.7-0.7 477 0.2 0.5 0.5 0 128 -0.5 40.8 -1 0.8 -2 0.2 -1 0.8 -2 0.2 -1 0.8 -2 0.2 -1 0.8 -2 0.2 -1 0.8 -2 0.2 -1 0.8 -2 0.3 -1.9 2.1 0 4 2 22 -0.5 47 -0.6 8 -2 5.9 -19 48 -18 34.7 -16.8 19.4 -43.8 42 -8.2 7 -3.5 2 -54.6 26 -6.8 3 -12.3 4.6 -66 8.1 -17.1-2.7 -35.9-6.5 -2 0.9 -1.3 1.6z"/>
<path fill="#2b2b2b" d="M378.5 507.5l-7 0 14-28 0.7-2 -0.7-1.4 -1 0 -1-1 -1 0 -1-1.1 -1 0.1 -1-1.3 -1 0.2 -1-1.3 -1 0.1 -1-1.3 -1 0.2 -1-1.3 -1 0.2 -0.7-1.1 -1.3-0.1 -1-1.3 -1 0.6 -5.7 5.8 -0.2 1 -1.8 2 -0.2 1 -1.8 2 -0.2 1 -1.8 2 -0.2 1 -1.8 2 -1.2 3 -1.8 2 -1.2 3 -1.8 2 -1.2 3 -1.8 2 -1.3 3 -1.8 2 -0.2 1 -0.8 1 -9.6 0 22-44 0.7-2 -0.3-0.9 -1 0.3 -4.6 4.6 -8 12 -10.5 18 -1.5 2 -1.5 3 -4.5 7 -69.4 0.5 -12 0 -0.5-0.5 -0.2-477 0.7-0.7 477 0.2 0.5 0.5 -0.1 125 -0.4 43.3 -1 0.8 -2 0.2 -1 0.8 -2 0.2 -1 0.8 -2 0.2 -1 0.8 -2 0.2 -1 0.8 -2 0.2 -1 0.8 -2 0.2 -2.3 2.7 2.3 26 -0.5 46 -0.5 7.7 -2 6.2 -19 48.2 -18 34.8 -17.4 20.1 -43.7 42 -6.9 6 -3.2 2 -58.7 28 -16.1 6.3 -66 8.1 -15.7-2.4 -37.3-6.7 -2 0.5 -1.7 1.2 -12.4 25z"/>
<path fill="#2c2c2c" d="M377.5 507.5l-4.7 0 14.5-29 -1.8-2.7 -1 0.1 -1-1.2 -1 0.2 -1-1.2 -1 0.2 -1-1.4 -1 0.3 -1-1.4 -1 0.3 -1-1.3 -1 0.2 -1-1.3 -1 0.1 -0.6-0.9 -1.4-0.3 -1-1.2 -1 0.6 -5.8 5.9 -0.2 1 -1.8 2 -0.2 1 -1.8 2 -0.2 1 -3.8 5 -1.3 3 -1.7 2 -1.3 3 -1.7 2 -1.3 3 -1.7 2 -1.2 2.7 -1.9 2.3 -1 2 -8.2 0 22-44 0.4-1 -1.3-2.4 -1 0.3 -5 5.1 -0.3 1 -3.7 5 -0.3 1 -1.7 2 -0.3 1 -1.8 2 -1.2 3 -1.8 2 -1.2 3 -1.8 2 -1.2 3 -1.8 2 -1.2 3 -1.8 2 -1.2 3 -1.8 2 -1.2 3 -1.8 2 -68.9 0.5 -12 0 -0.5-0.5 -0.2-477 0.7-0.7 477 0.2 0.5 0.5 -0.1 125 -0.4 42.1 -1.7 0.9 -1.3 0.1 -1.7 0.9 -1.3 0.1 -1.7 0.9 -1.3 0.1 -1.7 0.9 -1.3 0.1 -1.7 0.9 -4.3 1.1 -1 0.9 -1.6 3 2.4 27 -0.8 51.1 -2 6.8 -20 50.7 -17 32.6 -18 20.8 -44.8 43 -5.2 4.6 -4.1 2.4 -58.8 28 -6.8 3 -8.3 3 -66 8.1 -26-4.1 -25-4.6 -4-0.2 -1.6 0.8 -1 1 -12.2 25z"/>
<path fill="#2e2e2e" d="M375.5 507.5l-1 0 1.8-3 0.2-1.1 0.8-0.9 0.2-1.1 0.8-0.9 0.2-1.1 0.8-0.9 0.2-1.1 0.8-0.9 0.2-1.1 0.8-0.9 0.2-1.1 0.8-0.9 0.2-1.1 0.8-0.9 0.2-1.1 0.8-0.9 0.2-1.1 0.8-0.9 0.2-1.1 0.8-0.9 0.2-1.1 0.8-0.9 0.2-1.1 0.8-0.9 0.1-1 -0.9-2.1 -1-0.3 -1-1.6 -1 0.2 -1-1.3 -1 0.3 -1-1.3 -1 0.2 -1-1.2 -1 0.2 -1-1.3 -1 0.2 -1-1.3 -1 0.1 -1-1.1 -1 0 -1-1.1 -1-0.1 -1-1.1 -2.1 1.6 -4.8 5 -8 12 -1.5 3 -1.5 2 -1.5 3 -1.5 2 -1.5 3 -1 1 -4.6 8 -6.6 0 21.9-44 0.2-1 -0.5-1 -1-0.3 -1-1.5 -1 0.5 -5.3 5.3 -0.2 1 -1.8 2 -0.2 1 -1.8 2 -0.2 1 -1.8 2 -0.2 1 -1.8 2 -1.2 3 -1.8 2 -1.2 3 -1.8 2 -1.2 3 -1.8 2 -1.2 3 -1.8 2 -1.2 3 -1.8 2 -1.2 3 -1.8 2 -68.7 0.5 -12 0 -0.5-0.5 -0.2-477 0.7-0.7 477 0.2 0.5 0.5 -0.1 125 -0.4 40.7 -1 0.2 -1 0.8 -2 0.2 -1 0.8 -2 0.2 -1 0.8 -2 0.2 -1 0.8 -2 0.2 -1 0.8 -2 0.2 -1 0.8 -2 0.2 -1.8 2.1 0 4 2.4 27 -0.4 43 -0.6 7 -1.7 6 -20.9 53 -16 30.5 -19.6 22.5 -48.4 46.2 -5.1 2.8 -61 29 -11.9 4.7 -66 8 -24.5-3.7 -26.5-4.8 -4-0.4 -1 0.6 -3 0.2 -0.7 0.4z"/>
<path fill="#2f2f2f" d="M340.5 507.5l-3.3 0 21-42 0.6-2 -2.3-2.6 -1 0 -1-1.5 -1 0.5 -5.5 5.6 -0.2 1 -1.8 2 -0.2 1 -1.8 2 -0.2 1 -1.8 2 -0.2 1 -1.8 2 -1.2 3 -1.8 2 -1.2 3 -1.8 2 -1.3 3 -1.7 2 -1.3 3 -1.7 2 -1.3 3 -1.7 2 -1.3 3 -1.7 2 -68.5 0.5 -12-0.1 -0.4-0.4 -0.3-477 0.7-0.7 477 0.2 0.5 0.5 -0.1 125 -0.4 40.2 -1 0.1 -1 0.8 -2 0.2 -1 0.8 -2 0.2 -1 0.8 -2 0.2 -1 0.8 -2 0.2 -1 0.8 -2 0.2 -1 0.8 -2 0.2 -2.3 2.7 2.7 32 -0.4 42.3 -1 7.8 -2 6.2 -20 50.8 -13 25.5 -3 5.1 -20.3 23.3 -47.7 45.6 -8.3 4.4 -63.3 30 -6.4 2.3 -67 8.1 -52-8.7 -2-0.2 -1 0.4 -1-0.4 -1 0.2 -1-0.8 -1-0.1 -1-1.4 -1-0.1 -1-1.5 -1 0.2 -1-1.2 -1 0.2 -1-1.2 -1 0.1 -1-1.2 -1 0.1 -1-1.1 -1 0 -1-1.1 -1 0 -1-1.1 -1-0.1 -3-2.1 -1.3 0.7 -5.1 5 -8.2 12 -8 14 -1.1 1 -2 4 -1.7 2 -0.6 1.5z"/>
<path fill="#313131" d="M340.5 507.5l-1 0 20.7-41 0.7-2 -0.5-1 -0.9-0.2 -1-1.4 -1 0 -0.9-1.4 -1.1 0 -1-1.3 -1 0.5 -5.7 5.8 -0.2 1 -1.8 2 -0.2 1 -1.8 2 -0.3 1 -1.7 2 -0.3 1 -1.7 2 -1.3 3 -1.7 2 -1.3 3 -1.7 2 -1.3 3 -1.7 2 -1.3 3 -1.8 2 -1.2 3 -1.8 2 -1.2 3 -1.8 2 -68.2 0.4 -12 0 -0.4-0.4 -0.3-477 0.7-0.7 477 0.2 0.5 0.5 -0.1 125 -0.4 38.7 -2 0.2 -1 0.8 -2 0.2 -1 0.8 -2 0.2 -1 0.8 -2 0.2 -1 0.8 -2 0.2 -1 0.8 -5 1.3 -0.7 1 -0.9 3 0 1 2.6 26 0.3 6 -0.4 38 -0.9 9.2 -3 9.6 -20 50.6 -12 23.5 -3 4.9 -21.9 25.2 -46.1 44 -3.3 2 -12.3 6 -59.3 28 -3.1 0.9 -8.2 1.1 -57.4 7 -2.4 0 -51-8.5 -3-0.1 -1-0.5 -1 0.4 -1-1 -1 0.1 -1-1.5 -1 0.1 -1-1.3 -1 0 -1-1.1 -1 0.1 -1-1.1 -1 0 -1-1 -1-0.1 -1-1 -1-0.1 -1-0.9 -1-0.2 -5-3.1 -1.6 0.8 -5.1 5 -3.1 5 -3.7 5 -0.3 1 -1.8 2 -1.3 3 -1.7 2 -1.3 3 -1.8 2 -1.2 3 -1.9 2 -1.2 3 -1.4 1 -0.6 1.7z"/>
<path fill="#323232" d="M320.5 507.5l-67 0.4 -12 0 -0.4-0.4 -0.3-477 0.7-0.7 477 0.3 0.4 0.4 -0.4 162.5 -2 0.2 -1 0.8 -2 0.2 -1 0.8 -2 0.2 -1 0.8 -2 0.2 -1 0.8 -2 0.2 -1 0.8 -2 0.2 -1 0.8 -2 0.3 -2 2.2 3.1 35 -0.4 37 -0.7 9.1 -3 10.5 -20.3 51.4 -11.7 23.1 -3 4.8 -23.6 27.1 -44.4 42.3 -10.5 5.7 -65.5 31 -21.3 3 -48.7 5.7 -55-9.1 -1 0.2 -1-1 -1 0.2 -0.6-1 -1.4-0.4 -1-1.1 -1-0.1 -1-0.9 -1-0.1 -1-0.9 -1-0.2 -1-0.9 -1-0.2 -9-5.1 -1 0.2 -0.9 0.7 -5.1 5 -0.8 1 -0.2 0.9 -1.9 2.1 -0.1 0.7 -1 0.7 -0.9-0.4 5.5-11 0-1 -0.6-1.1 -1-0.2 -1-1.4 -1 0 -0.9-1.3 -1.1-0.1 -0.6-0.9 -1.4-0.4 -1-1 -1.1 0.4 -5.2 5 -8.1 12 -8.1 14 -1 1 -5 9 -1 1 -2.1 4 -1.4 2z"/>
<path fill="#343434" d="M292.5 507.5l-39 0.4 -12 0 -0.4-0.4 -0.2-477 0.6-0.6 477 0.2 0.4 0.4 -0.4 161.6 -7 2.4 -1 0.1 -2 0.9 -1 0.1 -2 0.9 -1 0.1 -2 0.9 -1 0.1 -2 0.9 -1 0.1 -2.4 2.9 3.1 33 0.2 7 -0.6 36 -0.3 3 -3 11 -21.2 54 -10.8 21.3 -3 4.7 -22.5 26 -45.5 43.6 -11.7 6.4 -65.3 30.8 -31.6 4.2 -37.4 4.3 -56-9.1 -1-0.6 -1-0.1 -3-2.1 -16-8.4 -2 0.7 -2-0.9 -1-1.2 -1-0.2 -1-1.4 -1 0 -0.7-1 -1.3-0.3 -0.5-0.7 -1.5-0.5 -3-2.1 -1.7 0.6 -5.2 5 -1 2 -1.8 2 -0.2 1 -1.9 2 -0.2 1 -1.8 2 -0.2 1 -1.8 2 -1.2 2.9 -1.3 1.1 -1.7 3.8 -1.6 1.2 -1.4 3.4 -1 0.8 -0.7-0.2 16.4-33 -0.7-1.3 -1 0 -51.3 51.3z"/>
<path fill="#353535" d="M291.5 507.5l-38 0.4 -12 0 -0.4-0.4 -0.2-477 0.6-0.6 477 0.2 0.4 0.4 -0.4 159.2 -4 1.6 -1.6 0.2 -1.4 0.8 -1.6 0.2 -1.4 0.8 -1.6 0.2 -1.4 0.8 -1.6 0.2 -1.4 0.8 -1.6 0.2 -1.4 0.8 -1.5 0.2 -2 2 -0.2 4 3.3 35 -0.2 29 -0.4 11.3 -3.8 14.7 -21.3 54 -9.9 19.5 -3 4.5 -24.2 28 -24.8 24 -19 17.8 -13 7.2 -63.1 30 -11.9 2 -58 6.9 -56-9.1 -2-0.8 -19-10.1 -2 0.1 -0.9-1 -1.1-0.1 -0.7-0.9 -1.3-0.3 -0.5-0.7 -8.5-4.8 -2 0.5 -1-0.9 -1-0.1 -1-1.1 -1-0.1 -1-1.1 -1-0.1 -1-1.2 -1.6 0.9 -52 52z"/>
<path fill="#373737" d="M290.5 507.5l-37 0.4 -12 0 -0.4-0.4 -0.2-477 0.6-0.6 477 0.2 0.4 0.4 -0.4 158.3 -1 0.8 -2 0.2 -1 0.8 -2 0.2 -1 0.8 -2 0.2 -1 0.8 -2 0.2 -1 0.8 -2 0.2 -1 0.8 -2 0.2 -1 0.8 -2 0.2 -2.2 2.7 3.6 39 -0.2 28 -0.2 8.6 -0.4 3.4 -4 15 -21.6 55 -9 17.7 -3 4.3 -26 30 -30 29 -12 11 -14.3 8 -61.7 29.3 -15.4 2.7 -52.6 6.4 -3 0 -55-9 -2-0.7 -19-10 -2-0.4 -13-7.2 -2-0.2 -0.8-0.9 -1.2-0.2 -0.7-0.8 -1.3-0.3 -2.5-1.7 -1.5-0.3 -53.5 53.3z"/>
<path fill="#383838" d="M289.5 507.5l-36 0.4 -12-0.1 -0.3-0.3 -0.3-477 0.6-0.6 477 0.2 0.4 0.4 -0.4 156.4 -22 7.3 -1.1 1.3 0.1 1 -0.7 2 0.2 3 3.7 37 -0.2 28 -0.3 7 -0.6 4 -4.4 16 -21.7 55 -8 15.8 -3 4.1 -26.9 31.1 -33.1 32 -8 7.1 -15.6 8.9 -60.4 28.7 -18.9 3.3 -48.9 6 -3.2 0 -56-9.2 -45-22.7 -1.5 0.9 -53 53z"/>
<path fill="#3a3a3a" d="M288.5 507.5l-35 0.3 -12 0 -0.3-0.3 -0.3-477 0.6-0.6 477 0.2 0.4 0.4 -0.4 155.4 -1 0.1 -1 0.8 -2 0.2 -1 0.8 -2 0.2 -1 0.8 -2 0.2 -1 0.8 -2 0.2 -1 0.8 -2 0.2 -1 0.8 -2 0.2 -1 0.8 -2 0.2 -2.1 2.5 4.1 44 -0.3 26 -0.7 9.8 -5.3 19.2 -21.6 55 -7.1 13.9 -3 3.9 -28.7 33.2 -38.3 36.6 -20 11.4 -57 27 -22.6 4 -45.4 5.6 -3 0 -57-9.5 -43-22 -2-0.4 -54.5 54.3z"/>
<path fill="#3b3b3b" d="M287.5 507.5l-34 0.3 -12 0 -0.3-0.3 -0.3-477 0.6-0.6 477 0.3 0.3 0.3 -0.3 153.8 -2 0.2 -1 0.8 -2 0.2 -1 0.8 -2 0.2 -1 0.8 -2 0.2 -1 0.8 -2 0.2 -1 0.8 -2 0.2 -1 0.8 -2 0.2 -1 0.8 -1.8 0.2 -1.8 4 4.3 45 -0.2 25 -0.7 8 -6.8 24.3 -20.1 50.7 -4.9 10.2 -2 3.7 -2 2.6 -31.6 36.5 -23.7 23 -12.7 11.7 -21.5 12.3 -55.5 26.4 -26.4 4.6 -40.8 5 -3.8 0.2 -57-9.4 -45-22.8 -1.5 1 -54 54z"/>
<path fill="#3d3d3d" d="M286.5 507.5l-33 0.3 -12 0 -0.3-0.3 -0.3-477 0.6-0.6 477 0.3 0.3 0.3 -0.3 152.3 -2 0.3 -1 0.7 -2 0.3 -1 0.7 -2 0.3 -1 0.7 -2 0.3 -1 0.7 -2 0.3 -1 0.7 -2 0.3 -1 0.7 -2 0.3 -1 0.7 -2 0.3 -2.1 2.4 4.5 49 -0.2 25 -0.2 3 -0.8 4 -7.1 25 -20.1 50.7 -4 8.6 -2 3.5 -2 2.6 -33.5 38.6 -33.5 32.1 -20.3 11.9 -9.8 5 -46.9 22.3 -24.3 4.7 -46.7 5.8 -56-8.9 -3-0.8 -2.5-1.1 -39.5-20.5 -2-0.8 -1 0 -55.6 55.3z"/>
<path fill="#3e3e3e" d="M285.5 507.5l-33 0.3 -11 0 -0.3-0.3 -0.3-477 0.6-0.6 477 0.3 0.3 0.3 -0.3 145.8 -24 12 -0.9 1.2 0.2 1 -0.9 2 4.8 50 -0.2 21.1 -1 7.9 -7.9 28 -20.1 50.7 -3 6.6 -3 4.7 -36.4 42 -30.6 29.4 -26.6 15.6 -51.4 24.5 -28.3 5.5 -43.7 5.3 -56-9 -4-1.3 -40-20.7 -3.2-1.3 -1.8 1.3 -54.3 54.7z"/>
<path fill="#404040" d="M285.5 507.5l-32 0.3 -12.2-0.3 -0.4-477 0.6-0.6 477 0.3 0.3 0.3 -0.3 144 -24 12 -1.3 1 -1 2 5.2 54 -0.2 18 -0.7 7.3 -8.9 31.7 -22.1 55.1 -3 4.6 -38.4 44.3 -28.6 27.4 -30.2 17.6 -47.8 22.8 -32.5 6.2 -39.5 4.8 -57-9.2 -4.4-1.6 -39.6-20.5 -3-1 -1 0.6 -40 40z"/>
<path fill="#414141" d="M284.5 507.6l-43.2-0.1 -0.4-477 0.6-0.6 477 0.3 0.3 0.3 -0.3 101 -1 0.8 -3 1.2 -2 1.8 -3 1.2 -2 1.8 -3 1.2 -2 1.8 -3 1.2 -2 1.8 -3 1.2 -2 1.8 -0.9 0.2 -2.1 1.8 -0.9 0.2 -2.1 1.8 -0.9 0.2 -2.1 1.8 -0.9 0.2 -2.9 3 0.8 0.3 0.8-0.3 37.2-18.6 0 23.5 -2 1.1 -2 1.7 -3 1.3 -2 1.7 -3 1.3 -8 5.7 -1 0.2 -2 1.8 -1 0.2 -4.1 4.1 0.1 1.3 1 0.8 1-0.2 26-13 0 2.3 -25 12.4 -1 0.7 -1.1 2.7 5.7 56 -0.2 18 -1.1 7 -9.2 33 -22.1 54.7 -12 14.4 -30.4 34.9 -26.6 25.4 -33.8 19.6 -44.2 21 -36.8 7 -35.2 4.3 -58-9.3 -4.8-2 -39.2-20.3 -2-0.8 -0.8 0.1 -41.2 41.2 -1.3 1.8 -5 5 -1.3 2 -6 6 -0.5 1z"/>
<path fill="#434343" d="M284.5 507.6l-43.2-0.1 -0.3-477 0.5-0.5 477 0.2 0.3 0.3 -0.3 62.5 -1 0.9 -1 0.3 -3 2.7 -1 0.3 -3 2.7 -1 0.3 -3 2.7 -1 0.3 -3 2.7 -1 0.3 -3 2.7 -1 0.3 -3 2.7 -1 0.3 -3 2.7 -1 0.3 -3 2.7 -1 0.3 -3 2.7 -1 0.3 -3 2.7 -1 0.3 -11.3 11.3 0.1 1 1.2 0.2 52-26 0 20.4 -4 2 -1 1 -4 2.1 -1 0.9 -4 2.1 -6 3.9 -4 2.1 -4 3 -8 5 -4.3 4.3 0.3 1.1 2-0.8 38-19 0 22 -4 2.6 -3 1.4 -2 1.6 -3 1.4 -8 5.5 -1 0.4 -2 1.6 -1 0.4 -5.1 4.8 -0.5 1 1.1 1 -0.3 1 1 1 -0.3 1 1.5 9 4.7 48 0.1 17 -0.2 3 -1 4.4 -10 35.6 -21 52.1 -2 2.9 -6 7.1 -36.4 41.9 -24.6 23.3 -37.5 21.7 -40.5 19.2 -41.3 7.8 -30.7 3.8 -58-9.3 -4.2-1.5 -39.8-20.6 -3-1.2 -1.3 0.8 -28.7 28.8 -11.4 12.2 -1.3 2 -4.9 5 -1.4 2 -5.9 6 -0.4 1z"/>
<path fill="#444444" d="M284.5 507.6l-43.2-0.1 -0.3-477 0.5-0.5 477 0.3 0 61 -1.2 1.2 -1.8 0.8 -2.2 2.2 -1.8 0.8 -2.2 2.2 -1.8 0.8 -2.2 2.2 -1.8 0.8 -2.2 2.2 -1.8 0.8 -2.2 2.2 -1.8 0.8 -2.2 2.2 -1.8 0.8 -2.2 2.2 -1.8 0.8 -2.2 2.2 -1.8 0.8 -2.2 2.2 -1.8 0.8 -2.2 2.2 -1.8 0.8 -11.1 12.2 0.1 1 2 0.9 1-0.4 51-25.5 0 19.1 -4 2.2 -2 1.6 -3 1.4 -2 1.6 -3 1.4 -2 1.6 -3 1.4 -2 1.6 -3 1.4 -4 3 -8 5.1 -4.6 4.6 -0.3 1 0.9 0.4 2-0.6 38-19 0 21.1 -2 1 -2 1.7 -3 1.3 -2 1.7 -3 1.3 -5 3.6 -1 0.3 -2 1.7 -1 0.3 -2 1.7 -1 0.2 -6.2 6.3 0.9 1 -0.1 1 2.4 11 4.8 49 0.2 13 -1 7.5 -10.7 38.5 -20.3 50.3 -5.7 7.7 -40.8 47 -21.5 20.5 -34.9 20.5 -9.4 5 -34.7 16.3 -45.9 8.7 -27.1 3.2 -58-9.4 -4.5-1.8 -39.5-20.4 -2-0.9 -1 0 -29 29.2 -6.9 8.1 -4.9 5 -1.2 1.9 -5 5.1 -1 1.7 -6 6.1 -0.4 1.2z"/>
<path fill="#464646" d="M284.5 507.5l-43.2 0 -0.3-477 0.5-0.5 477 0.3 0 50.6 -1 1 -2 1 -4 4 -2 1 -4 4 -2 1 -4 4 -2 1 -4 4 -2 1 -4 4 -2 1.4 -23.4 23.2 0.4 1.1 1 0.1 1-0.6 1-0.1 0.4 0.5 -1.7 2 -0.3 1 0.6 1.4 1.2 0.6 0.8 1 1 0.1 33-16.7 3-1.2 1-0.8 2-0.9 1 0.4 1-1.3 1 0.3 1-1.3 1 0.4 -1 1.4 -1-0.1 -1 1.1 -1-0.1 -0.2 0.7 -1.8 1.6 -3 1.3 -2 1.7 -3 1.3 -2 1.7 -3 1.3 -2 1.7 -3 1.3 -2 1.9 -0.8 0.2 -2.2 1.8 -0.8 0.2 -2.2 1.8 -3.8 2.2 -1.2 1.2 -1 1.8 45-22.8 -0.1 9.8 -0.9 0.7 -3 1.2 -2 1.8 -3 1.3 -2 1.8 -3 1.2 -2 1.8 -3 1.2 -2 1.8 -3 1.2 -2 1.8 -1 0.3 -2 1.7 -1 0.3 -2 1.7 -4 2.3 -4.9 4.9 -0.3 1 2.2 1.2 1-0.4 38-19 0 19.8 -2 1 -2 1.7 -3 1.3 -2 1.7 -3 1.3 -5 3.6 -1 0.3 -2 1.7 -1 0.2 -2 1.8 -1 0.2 -5 4.6 -1.6 2 1 3 2.2 11 5 51 -0.3 12 -2.3 9.8 -9.8 35.2 -19.2 47.4 -6.9 9.6 -41.7 48 -17.4 16.7 -3 2.4 -41.2 23.9 -33.4 16 -4.4 1.7 -49.7 9.3 -22.3 2.6 -59-9.5 -4.8-2.1 -39.2-20.3 -2.4-0.7 -1.4 1 -18.2 18.3 -9.7 10.7 -1.3 2 -3.9 4 -1.1 1.8 -5 5 -0.4 1.2 -5.6 5.7 -1 1.8 -6 6.1 -0.6 1.4z"/>
<path fill="#474747" d="M284.5 507.5l-43.2 0 -0.3-477 0.5-0.5 477 0.3 0 50 -2 1.8 -1.1 0.4 -4.9 4.6 -1.1 0.4 -4.9 4.6 -1.1 0.4 -4.1 4 -1.9 1 -4.1 4 -1.9 1 -15.3 14 -14.7 15 0.1 1.1 2.1 0.9 -0.2 2 2.1 3 2 0.8 21.8-10.8 1.2-0.5 1 0.5 -1.2 1 -2.8 1.2 -2 2.4 -1-0.1 -2 2.1 -1 0.3 -2 1.8 -1 0.2 -2 1.8 -1.1 0.3 -4.7 5 0.1 1 0.7 0.1 47-23.6 0.1 6.5 -0.4 2 -2.7 1.6 -1 0.2 -2 1.8 -3 1.2 -2 1.8 -3 1.2 -2 1.8 -3 1.2 -2 1.8 -3 1.2 -2 1.9 -1 0.2 -2 1.8 -1 0.2 -2 1.8 -1 0.2 -2 1.8 -1 0.2 -5.1 5.1 -0.4 1 2.5 2.2 2-0.6 37-18.8 0 18.5 -2 1 -2 1.8 -3 1.2 -2 1.8 -3 1.2 -13 8.5 -5 4.3 -0.7 0.9 -0.2 1 3.2 15 5.1 53 -0.4 8 -6 22.4 -7 24.6 -18 44.5 -9 12.5 -41.8 48 -15.2 14.7 -3 2.2 -45 26.1 -31 14.8 -2 0.8 -7.1 1.4 -48.6 9 -17.3 2.1 -59-9.5 -4-1.5 -40-20.7 -3-1.1 -1.2 0.7 -13.8 14 -8.8 10 -1.2 1.8 -4 4 -0.4 1.2 -4.6 4.7 -1 1.8 -5 5 -1 1.9 -5 5.1 -1 1.8 -6 6z"/>
<path fill="#494949" d="M284.5 507.5l-43.1 0 -0.4-477 0.5-0.5 477 0.3 0 49.6 -2 1.9 -1.5 0.7 -4.5 4.3 -1.5 0.7 -4.5 4.3 -1.5 0.7 -4.1 4 -1.9 1 -4.1 4 -1.9 1 -9.5 8.6 -1 0.4 -19 18.5 -0.7 1.5 0.7 1.4 1 0.6 0.7 2 1.3 2 3 3 1 0 11-5.6 1 0.1 0.1 0.5 -1.1 1.2 -1 0.1 -2 1.9 -1.7 0.8 -4.6 5 -0.2 1 1.5 0.7 47-23.2 0 6.5 -0.5 1 -3.5 1.6 -2 1.8 -3 1.3 -2 1.8 -3 1.2 -2 1.8 -3 1.2 -2 1.8 -3 1.2 -2 1.8 -1 0.2 -2 1.8 -1 0.3 -2 1.8 -1 0.2 -2 1.8 -1 0.2 -5.2 5.2 -0.6 1 1.5 1 0.2 1 2.1 1.5 1.4-0.5 36.6-18.3 0 16.4 -30 17.9 -0.8 1 -0.6 2 3.4 16.8 5 54.2 -1 6.8 -10 36.3 -3.9 12.9 -16.1 39.5 -11.1 15.5 -41.9 48 -12 11.7 -3 2.3 -48.1 28 -29.9 14.3 -44.8 8.7 -24.4 4 -5.8 0.4 -59-9.5 -4.5-1.9 -39.5-20.4 -2-0.9 -1 0 -11.3 11.3 -7.7 8.8 -0.5 1.2 -3.5 3.7 -1 1.7 -4 4.1 -1 1.8 -4 4.1 -1 1.8 -5 5 -1 1.9 -5 5.1 -1 1.8 -6 6.1z"/>
<path fill="#4a4a4a" d="M283.5 507.5l-42.1 0 -0.4-477 0.5-0.5 477 0.3 0 49.3 -2 1.9 -1.9 1 -4.1 4 -1.9 1 -4.1 4 -1.9 1 -4.1 4 -1.9 1 -4.1 4 -1.9 1 -4 4 -1.1 0.4 -4 3.8 -1.6 0.8 -9 8 -10.6 11 0.7 2 5.5 8 2 0.8 5-2.2 0.2 0.4 -1.1 2 -2.7 3 -0.4 1 3 1.9 46-22.9 0 5.2 -1 1.1 -3 1.1 -2 1.9 -3 1.2 -2 1.8 -3 1.2 -2 1.8 -3 1.3 -2 1.7 -3 1.3 -2 1.8 -1 0.2 -2 1.8 -1 0.2 -2 1.8 -1 0.3 -2 1.7 -1 0.3 -6 6.3 1.5 1 0 1 1.4 1 0.2 1 1.9 0.5 37-18.4 0 14.4 -15 8.4 -16 8 -0.9 1.1 -0.5 2 4.1 20 4.3 44.5 0.5 8.5 -1.5 7.2 -12 43.3 -2.1 6.5 -8.9 22.3 -5 12.2 -2 3.5 -12.3 17 -41.9 48 -9.8 9.5 -3.4 2.5 -51.7 30 -25.9 12.4 -44.5 8.6 -28.5 4.8 -2 0 -18.2-2.8 -41.8-6.9 -44-22.4 -2-0.8 -0.6 0.1 -5.4 5.1 -6 6.7 -0.5 1.2 -2.8 3 -0.5 1 -3.8 4 -0.2 1 -3.8 4 -0.4 1 -4.7 5 -0.3 1 -10.1 11 -1.1 2 -4.9 5 -1.3 2 -5.9 6 -1.1 2z"/>
<path fill="#4c4c4c" d="M283.5 507.5l-42.1 0 -0.4-477 0.5-0.5 477 0.3 0 48.6 -2 1.9 -2 1.1 -4 3.9 -2 1.1 -4 3.9 -2 1.1 -4 3.9 -2 1.1 -4 3.9 -2 1.1 -4 4 -2 1.2 -3 3 -2 1.1 -7 6.4 -1.7 0.9 -10.3 10.4 -0.8 1.6 1 2 5.8 8.4 1.2 0.6 0.7 1 1.1 0.1 0.8 0.9 -0.8 1 -0.2 1 1.5 1 0.3 1 1.4 0.6 46-22.8 0 4.2 -1 1.1 -3 1.2 -2 1.8 -3 1.3 -2 1.8 -3 1.2 -2 1.8 -3 1.2 -2 1.8 -3 1.2 -2 1.9 -1 0.1 -2 1.9 -1 0.2 -2 1.8 -1 0.2 -2 1.8 -1 0.2 -6.2 6.5 1.5 1 -0.1 1 1.4 1 0 1 1.3 1 0.4 1 0.7 0.4 1-0.1 36-18 0 10.3 -32 16 -1 1.4 -0.4 2 0.3 2 4.4 21 4.1 42 0.5 9 -1.9 8.5 -12.9 46.5 -13.1 33.1 -3 5.8 -13.7 19.1 -42.8 49 -8.5 8.2 -11.3 6.8 -46.8 27 -21.9 10.4 -33.6 6.6 -39.4 7 -2.8 0 -13.6-2 -46.6-7.7 -43-22 -3-1.1 -1.4 0.8 -4.6 4.5 -0.8 1.5 -5 6 -0.4 1 -6.2 7 -1.1 2 -3 3 -1.2 2 -3.9 4 -1.1 2 -3.9 4 -1.2 2 -4.9 5 -1.1 2 -4.9 5 -1.1 2 -6 6z"/>
<path fill="#4d4d4d" d="M268.5 507.5l-27.1 0 0.1-44.4 55-55 1-1.6 -1-0.5 -1 0.2 -4 1.9 -50 33.7 -0.4-114.3 -0.1-297 0.5-0.5 477 0.4 0 43.8 -2 1 -3 3 -2 1 -3 3 -2 1 -3 3 -2 1 -3 3 -2 1 -3 3 -2 1 -3 3 -2 1 -3 3 -2 1 -3 3 -2 1 -18.7 18.3 0.7 0.5 3-1.3 0.8 0.8 -2.8 3.2 -0.2 1.8 8.2 12.1 1.9 0.9 -0.3 2 1.3 1 0.1 1 3 1.6 45-22.5 0 2.5 -1 1.2 -3 1.3 -2.1 1.9 -2.9 1.2 -2 1.8 -3 1.2 -2 1.8 -3 1.3 -2 1.7 -3 1.3 -2 1.8 -1 0.2 -2 1.8 -1 0.3 -2 1.8 -1 0.2 -2 1.8 -1 0.2 -6.3 6.6 1.4 1 -0.2 1 1.5 1 -0.3 1 1.5 1 -0.1 1 1.3 1 0.1 1 1 1 0 1 1 1 -0.1 1 0.9 1 -0.3 1 0.4 4 5.1 24 4.3 46 -0.2 3.4 -1 5.6 -14.2 51 -11.8 30 -3 5.7 -15.9 22.3 -43.9 50 -5.2 4.9 -28.9 17.1 -33.3 19 -16.8 8 -29.3 6 -45.7 8.2 -17.8-2.2 -44.2-7.2 -4.2-1.8 -40.8-21 -2-0.5 -1 0.3 -1-1 -1 0.2 -63 63z"/>
<path fill="#4f4f4f" d="M267.5 507.5l-26.1 0 0.1-41.1 57.6-57.9 -1.6-3 -1-0.3 -1 0.1 -4 1.9 -2 1.7 -1 0.3 -2 1.7 -1 0.3 -2 1.7 -1 0.3 -2 1.7 -1 0.3 -2 1.7 -1 0.3 -2 1.7 -1 0.3 -2 1.7 -1 0.3 -2 1.7 -1 0.3 -2 1.7 -1 0.3 -2 1.7 -1 0.3 -2 1.7 -1 0.3 -2 1.7 -1 0.3 -2 1.8 -1 0.2 -8 5.8 -1 0.3 -2 1.8 -0.4-113.6 -0.1-297 0.5-0.5 28 0 449 0.4 0 42.8 -1 0.8 -1 0.3 -4 3.7 -1 0.3 -4 3.7 -1 0.3 -4 3.7 -1 0.3 -4 3.7 -1 0.3 -4 3.7 -1 0.3 -4 3.7 -1 0.3 -4 3.7 -1 0.3 -4 3.7 -1.3 0.5 -8.7 8 -10.9 11 0.1 1 2.8 1 -0.8 1 -0.1 1 1.7 3 6.2 9.1 1 1.3 0.9 0.6 0.5 2 1 1 0.4 1 1.5 1 0.4 1 1.3 0.5 45-22.5 0 1.1 -1 1.2 -3 1.2 -2.8 2.5 -3.2 1.5 -1 1.1 -8 4.5 -2 1.6 -3 1.4 -5 3.9 -1 0.2 -2 1.8 -1 0.3 -2 1.7 -1 0.3 -6.4 6.7 1.3 1 0.1 1.4 1.1 0.6 -0.3 1 1.4 1 -0.3 1 1.4 1 -0.3 1 1.3 1 -0.4 1 1.1 1 -0.3 1 0.6 1 5.7 27 2 17.6 2.4 28.4 -0.3 4 -1.4 8 -14.7 52.7 -11 27.4 -10 14.7 -11 15.2 -43.2 49 -3.8 3.1 -42.4 24.9 -23 13 -12.6 6 -29.5 6 -45.5 8.2 -19.8-2.2 -43.2-7 -44-22.4 -3-1.1 -1-0.8 -1 0 -64.6 64.3z"/>
<path fill="#505050" d="M265.5 507.5l-24.1 0 0.1-37.9 12.4-12.1 46.6-46.8 0.2-1.2 -2.9-4 -1.3-0.7 -1 0 -1 0.7 -3 1.1 -36 24 -11 7.9 -1 0.3 -2 1.8 -0.4-113.1 -0.1-297 0.5-0.5 42 0 435 0.4 0 42.2 -1 0.9 -1 0.2 -4 3.8 -1 0.2 -4 3.8 -1 0.2 -4 3.8 -1 0.2 -4 3.8 -1 0.2 -4 3.8 -1 0.2 -4 3.8 -1 0.2 -4 3.8 -1 0.2 -4 3.8 -1 0.2 -4 3.8 -1 0.5 -3 2.9 -1.3 0.6 -10.7 10.7 -0.6 1.3 0.6 1.3 1.3 0.7 0.5 2 1.1 2 8.4 12 2.3 4 1.2 1 0.2 1 2 1.4 1 0.2 1.4-0.6 27.6-13.8 0.6 0.8 -1.6 1.3 -4 2.1 -1 1 -4 2 -1 1.1 -11 7.4 -5.6 6.1 1.2 1 0 1 0.4 0.6 0.8 0.4 -0.2 1 1.2 1 -0.2 1 1.2 1 -0.2 1 0.9 1 7.3 33 3.2 31.7 0.7 10.3 -2.2 15 -14.6 52 -9.9 24.9 -14 20.3 -10.2 13.8 -40.8 46.2 -6.9 4.8 -35.7 21 -28.2 16 -10.2 4.9 -35.1 7.1 -39.9 7.2 -4-0.2 -24.4-3 -35.6-5.8 -47-24 -1-0.4 -1 0.2 -65.1 65z"/>
<path fill="#525252" d="M264.5 507.5l-23 0 0-19.4 67-67 1-1.6 -1-1.6 -1-0.5 -5 2 -2 1.8 -1 0.1 -2 1.8 -1 0.2 -3 2.7 -1 0.1 -3 2.7 -1 0.2 -4 3.7 -2 0.2 -0.2-0.4 0.9-1 19.3-19.5 0.1-0.5 -1.2-2 -2.9-3.6 -4-3.2 -5 2.2 -6 3.8 -2 1.9 -2 1.1 -2 1.9 -2 1.1 -2 1.9 -2 1.1 -7 5.6 -1 0.4 -7 5.6 -1 0.3 -2 1.9 -2 1 -10 7.6 -0.4-409.6 0.4-0.4 42-0.1 435 0.4 0 36 -0.6 0.1 -3.4 3.3 -1.6 0.7 -3.4 3.3 -1.6 0.7 -3.4 3.3 -1.6 0.7 -3.4 3.3 -1.6 0.7 -3.4 3.3 -1.6 0.7 -3.4 3.3 -1.6 0.7 -3.4 3.3 -1.6 0.7 -3.4 3.3 -1.6 0.7 -3.4 3.3 -1.6 0.7 -17.4 17 1 0 1-0.7 1.1 0.7 0.2 1 -3.3 3.6 -0.1 1.4 14.5 22 1.6 2.3 1.2 0.7 0.3 1 1.5 0.6 2-0.8 17-8.6 0.1 0.8 -1.1 1.1 -1 0.2 -2 1.9 -2 1.1 -1 1.1 -5 3.1 -5 5.3 -0.7 1.2 2.1 3 0 1 0.9 1 0.1 1 1.3 3 7.5 33 0.8 6 3 33 -2.8 19 -15 53 -7.2 18.3 -2 4 -21 29.7 -2.9 4 -8.1 9.4 -31 35 -2 1.9 -6.7 4.7 -15.1 9 -38.1 22 -14.3 8 -5.8 2.8 -35.6 7.2 -40.4 7.2 -35.7-4.2 -27.3-4.4 -5.7-2.6 -41.3-21.3 -2.5-0.7z"/>
<path fill="#535353" d="M262.5 507.5l-21 0 0-15.7 69-69 0.9-1.3 -1.9-3.1 -1-1.1 -1-0.4 -1 0 -1 0.8 -3 1 -2 1.7 -2 0.4 -0.5-0.3 5.9-6 0.6-1 -1.9-3 -7-8 -2.1-0.3 -1 0.7 -3 1.1 -2 1.7 -1 0.1 -2 1.7 -1 0.3 -3 2.7 -1 0.3 -3 2.7 -1 0.3 -3 2.7 -1 0.3 -3 2.7 -1 0.3 -3 2.7 -1 0.3 -3 2.7 -1 0.3 -3 2.7 -1 0.3 -3 2.7 -1 0.2 -3 2.7 -1 0.3 -6 4.8 -0.4-409 0.4-0.4 42 0 435 0.3 0 34.7 -1 0.3 -4 3.7 -1 0.3 -4 3.7 -1 0.3 -4 3.7 -1 0.3 -4 3.7 -1 0.3 -4 3.7 -1 0.3 -4 3.7 -1 0.3 -4 3.7 -1 0.3 -4 3.7 -1 0.3 -4 3.7 -1.2 0.4 -8.6 8 -10.9 11 0.1 1 0.6 0.3 1 0.2 1-0.6 0.8 0.1 -1.4 2 -0.2 1 0.4 1 15.9 24 1.1 1 0.4 1.1 1.7 0.9 0.3 0.7 1 0.3 5-2.7 1-0.2 0.3 0.9 -5.3 5.5 -0.8 1.5 1.7 3 2.2 6 7.6 34 0.9 6 2.5 27 -0.3 7 -3 18 -15 53 -5.8 14.9 -2 3.9 -24.1 34.2 -10.9 13 -28 31.6 -8.5 6.4 -7.7 5 -35.9 21 -29.9 16.6 -36.2 7.4 -39.8 7.1 -36.1-4.1 -27.9-4.3 -47-24 -2.2-0.7 -1.4 1 -66 66z"/>
<path fill="#555555" d="M260.5 507.5l-19 0 0-12.4 7.7-7.6 2.3-1.5 61-61.2 0.9-1.3 -3.5-5 -1.4-1.6 -2-1.2 -1.9-3.2 -9.1-10.4 -1-0.4 -3 0 1.1-2.2 -1.1-0.7 -5 2.2 -45 30 -0.4-400.5 0.4-0.4 42 0 435 0.3 0 34.2 -1 0.2 -4 3.8 -1 0.2 -4 3.8 -1 0.2 -4 3.8 -1 0.2 -4 3.8 -1 0.2 -4 3.8 -1 0.2 -4 3.8 -1 0.2 -4 3.8 -1 0.2 -4 3.8 -1 0.2 -4 3.8 -1.9 0.9 -3.1 3.1 -6 4.7 -10 10 -0.5 1.2 0.5 1.3 1.4 0.7 0.4 2 1.1 2 16.7 25 1.4 1 0.2 1 1.8 0.9 2-0.4 0.5 0.5 -2.2 3 -0.2 1 2.2 5 1.5 5 7.2 33 1.2 8 1.9 20 0.2 6 -3.2 22 -5.1 19.4 -10.9 37.6 -4.1 10.4 -2 3.9 -28.1 39.7 -34.9 39.7 -8.4 6.3 -10.4 7 -34.2 20 -29 16.2 -7 1.8 -19.7 4 -49.3 9 -35.9-4 -28.3-4 -10.5-5 -37.3-19.4 -2-0.8 -0.8 0.2z"/>
<path fill="#565656" d="M256.5 507.5l-7.1 0 73-73 0.2-1 -1.1-1.7 -1-0.4 -1 0.1 -4 1.9 -2 1.7 -1 0.2 -2 1.7 -1 0.3 -3 2.7 -1 0.1 -3 2.7 -1 0.2 -4 3.7 -1 0 -1 0.7 -0.5-0.9 19.9-20 0.5-1 -1.8-3 -14.6-17 -5-5 -1.5-2.1 -1-0.3 -1 0.1 -1 0.7 -3 1.1 -2 1.8 -1 0.2 -2 1.8 -1 0.2 -2 1.8 -1 0.2 -2 1.8 -1 0.2 -5 3.8 -1 0.2 -2 1.8 -1 0.2 -2 1.8 -1 0.2 -2 1.8 -1 0.2 -2 1.8 -1 0.2 -2 1.8 -1 0.2 -2 1.8 -1 0.2 -2 1.8 -1 0.2 -5 3.8 -1 0.2 -0.4-399.5 0.4-0.4 43 0 434 0.4 0 27.2 -3 2.9 -1.8 0.9 -3.2 3.1 -1.8 0.9 -3.2 3.1 -1.8 0.9 -3.2 3.1 -1.8 0.9 -3.2 3.1 -1.8 0.9 -3.2 3.1 -1.8 0.9 -3.2 3.1 -1.8 0.9 -3.2 3.1 -1.8 0.9 -3.2 3.1 -1.8 0.9 -3.2 3.1 -1.8 0.9 -17.2 17 1 0 1-0.7 1.3 0.7 0 1 -3.4 4 0.6 2 1 1 2.2 4 18 27 1.5 1 0.1 1 1.3 1 -0.8 2 1.4 3 1.4 5 8.4 38.4 2.1 19.6 0.2 10 -3.8 25 -5.5 20.5 -9 30.9 -2 6.6 -3 7.1 -15 21.8 -17.4 24.1 -31.6 35.8 -21.5 15.2 -32.4 19 -28.1 15.6 -13 3.4 -9.7 2 -53.3 9.9 -27.2-2.9 -37.8-5 -14.2-7 -33.8-17.6 -3-1.2 -1.4 0.8 -69 69z"/>
<path fill="#585858" d="M446.5 469.7l-4 0.6 -7.8-0.8 -33.2-3.9 -24-3.4 -51-26.1 -5-4.9 -2-0.3 -1 0.7 -3 1 -2 1.5 -1 0 -0.3-0.6 5-5 0.3-1 -1.9-3 -5.9-7 -16.8-19 -1.4-0.9 -3 0.4 -2 0.9 -2 1.7 -1 0.3 -2 1.7 -4 2.3 -2 1.7 -1 0.3 -2 1.7 -1 0.3 -5 3.7 -1 0.3 -2 1.7 -1 0.3 -2 1.7 -1 0.3 -2 1.7 -1 0.3 -2 1.7 -1 0.3 -2 1.7 -4 2.3 -2 1.7 -1 0.3 -2 1.7 -1 0.3 -0.4-398.4 0.4-0.4 43 0 434 0.4 0 25.6 -4 3.8 -1 0.2 -4 3.8 -1 0.2 -4 3.8 -1 0.2 -4 3.8 -1 0.2 -4 3.8 -1 0.2 -4 3.8 -1 0.2 -4 3.8 -1 0.2 -4 3.8 -1 0.2 -4 3.8 -1 0.2 -4 3.8 -1.5 0.6 -19.3 19 0.1 1 0.7 0.3 1 0.3 1.2-0.6 -0.1 1 -0.8 1 -0.1 1 1 2 22.8 34.7 0.5 0.3 -0.1 2 1.6 4 9.6 44 1.8 18 0 8 -4.8 30 -15.5 54 -1.1 3.3 -2 3.8 -33.3 46.9 -13.7 16 -16 17.8 -22.7 16.2 -30.5 18 -28.8 16 -14.9 4 -9 2z"/>
<path fill="#595959" d="M445.5 468.6l-4 0.4 -23-2.5 -39-5 -4-1 -27.5-14 -22.5-12 -5.8-5 -1.3-2 -5-6 -16.9-19.4 -4-4.4 -2-1.9 -1-0.5 -1 0.2 -4 1.9 -2 1.7 -1 0.3 -2 1.7 -1 0.3 -2 1.7 -1 0.3 -2 1.7 -1 0.3 -2 1.7 -1 0.3 -2 1.7 -1 0.3 -2 1.7 -1 0.3 -2 1.7 -1 0.3 -2 1.7 -1 0.3 -2 1.7 -1 0.3 -2 1.7 -1 0.3 -2 1.7 -1 0.3 -2 1.7 -1 0.3 -4 2.9 -0.4-395.8 0.4-0.4 43 0 434 0.4 0 24.2 -4.2 3.8 -1.8 0.9 -3.2 3.1 -1.8 0.9 -3.2 3.1 -1.8 0.9 -3.2 3.1 -1.8 0.9 -3.2 3.1 -1.8 0.9 -3.2 3.1 -1.8 0.9 -3.2 3.1 -1.8 0.9 -3.2 3.1 -1.8 0.9 -3.2 3.1 -1.8 0.9 -3.2 3.1 -1.8 0.9 -7 6.3 -2 1 -2 2.1 -1 2.1 -7.4 7.6 -0.3 1 0.7 1.4 1.2 0.6 0.5 2 1.2 2 19.2 29 3.8 7 3.1 12.6 8 37.2 1.5 13.2 0.3 5 -0.3 4 -5.3 34 -12.2 42.6 -3.2 10.4 -1.8 4.3 -18 26 -18.7 25.7 -18.3 21 -8 8.7 -27.2 19.3 -28.9 17 -25.9 14.3 -25.4 6.7z"/>
<path fill="#5b5b5b" d="M444.5 467.5l-4 0.2 -29.3-3.2 -33.7-4.4 -3-1 -30.5-15.6 -19.5-10.5 -4-3.6 -27-31 -3-3.2 -1-0.4 -1 0 -1 0.8 -3 1 -43 29 -0.4-395.1 0.4-0.4 60 0 403.8 0.4 -1.9 2 -1.1 2 -4.9 5 -1.1 2 -4.9 5 -1.1 2 -4.9 5 -1.1 2 -4.9 5 -1.1 2 -4.9 5 -1.1 2 -3.9 4 -1.1 2 -4 4 -1 2 -3 3 -1 2 -3 3 -1 2 -5 6 -1.1 2 -3 4 -2.3 5 0.6 2 1 1.2 2 0.4 1-0.7 1.5 0.1 -1.7 2 -0.3 1 0.3 1 21.2 32.2 4.2 7.8 1.8 5 4 17.6 6.4 30.4 1 7 0.5 7 -0.2 4 -6.3 39 -13.9 48 -1.5 3.7 -2.4 4.3 -17.6 25.3 -19.4 26.7 -21.6 24.6 -4 3.4 -29.7 21 -22.1 13 -27.2 15.2 -32.9 8.8z"/>
<path fill="#5c5c5c" d="M442.5 466.5l-17-1.6 -28.9-3.4 -20.1-2.7 -3-1.1 -31.7-16.2 -18.3-9.9 -4-3.9 -28.3-32.2 -3.7-3 -5 2.2 -2 1.6 -1 0.2 -2 1.8 -1 0.2 -3 2.8 -1 0.2 -3 2.8 -1 0.2 -3 2.8 -1 0.2 -3 2.8 -1 0.2 -3 2.8 -1 0.2 -2.1 2 -1.9 1 -3 2.7 -1 0.3 -2.1 2 -1.9 0.9 -3 2.6 -0.4-394.5 0.4-0.4 60 0 402.9 0.4 -2 2 -0.9 1.8 -5 5.1 -1 1.9 -5 5.1 -1 1.9 -5 5.1 -1 1.9 -5 5.1 -1 1.9 -5 5.1 -0.3 1.1 -4.7 4.9 -1 1.9 -4.1 4.2 -0.3 1 -3.7 4 -0.3 1 -3.6 3.8 -0.4 1.2 -5.8 7 -0.3 1 -3.8 5 -2.1 4 0 2 3.6 4 19.8 30 4 6.6 2 4.4 2.5 7 1.5 6.5 8 37.4 1.7 10.1 0.3 5 -0.3 3 -6.8 43 -12.9 44.2 -1 2.6 -5.1 9.2 -17.9 25.8 -19.2 26.2 -18.8 21.5 -2 1.8 -9.2 6.7 -27.1 19 -20.5 12 -24.2 13.5 -39.7 10.5z"/>
<path fill="#5e5e5e" d="M446.5 464.5l-5 0.8 -15-1.5 -38-4.6 -12-1.6 -3-0.9 -31.8-16.2 -19.2-10.4 -5-5 -26-29.6 -3-3.2 -1-0.3 -1 0 -1 0.7 -3 1.1 -2 1.7 -2 0.6 -3 2 -2 1.9 -2 1.1 -2 1.9 -2 1.1 -2 1.9 -2 1.1 -2 1.9 -2 1.1 -2 1.9 -2 1.1 -2 1.9 -2 1.1 -2 1.9 -2 1.1 -6 4.8 -0.4-393.4 0.4-0.4 60 0 402.3 0.4 -1.8 2 -0.5 1.3 -5.5 5.7 -0.5 1.3 -5 5.1 -1 1.9 -5 5.1 -1 1.9 -5 5.1 -1 1.9 -5 5.1 -0.8 1.6 -4.2 4.4 -1 1.8 -4.6 4.8 -0.2 1 -3.8 4 -0.3 1 -3.1 3.2 -0.9 1.8 -5.9 7 -0.3 1 -3.8 5 -2.3 4 0.3 2 7 9 9.9 14.8 7.9 12.2 3 6 4.5 13 6.6 30.4 4 20.6 -0.1 4 -1.9 13.3 -5.9 35.7 -12.1 40.8 -7.8 14.2 -17.2 24.7 -20 27.3 -16 18.3 -15.8 11.7 -25.8 18 -18.5 11 -22.9 12.7 -42.4 11.3z"/>
<path fill="#5f5f5f" d="M443.5 463.7l-4 0.1 -31.2-3.3 -31.8-4.1 -4-1.2 -31-15.7 -20-10.9 -5-5 -27.4-31.1 -2.5-2 -1.1-1.7 -1-0.5 -1 0.2 -4 1.9 -2 1.7 -1 0.3 -2 1.7 -1 0.3 -2 1.7 -1 0.3 -2 1.7 -1 0.3 -2 1.7 -1 0.3 -5 3.7 -1 0.3 -2 1.7 -1 0.3 -2 1.7 -1 0.3 -2 1.7 -1 0.3 -5 3.7 -1 0.3 -2 1.7 -0.4-385.6 0.4-0.4 60 0 401.6 0.4 -1 1 -1.1 2 -4.9 5 -1.1 2 -4.9 5 -1.1 2 -4.9 5 -1.1 2 -4.9 5 -1.1 2 -4.9 5 -1.1 2 -9 10 -1.2 2 -2.9 3 -1.2 2 -3 3 -1.2 2 -3 3.6 -10.7 11.4 0.7 2 9 11.3 8 11.9 7.1 10.8 3.7 7 6 17 7.2 33.5 2.9 15.5 -0.1 3 -2.8 19 -5.8 34 -10.2 34.5 -2 4.2 -8.6 15.3 -15.4 22.2 -20 27.2 -5.1 6.6 -9.9 11 -21.8 16 -26.1 18 -35.1 19.9 -25.9 7.1 -23.7 6z"/>
<path fill="#616161" d="M441.5 462.6l-21-2 -26-3.1 -20-2.7 -3-1.1 -32-16.2 -19-10.4 -6-6.1 -28.6-32.5 -1.4-0.8 -1 0 -5 2.4 -37 24.9 -0.3-384.5 0.3-0.3 60-0.1 391.7 0.4 -2 3 -5.7 5.7 -1.3 2.3 -5.7 5.7 -1.3 2.3 -4.9 5 -1.1 2 -5 5 -1 2 -4 4 -1 2 -4 4 -1 2 -3 3 -1.1 2 -2.9 3 -1.1 2 -5 6 -4 6 -2.5 5 0.8 2 10.1 12.2 5 6.9 11 16.8 3 5.8 7 19.6 7 32.6 2.4 13.1 -0.1 6 -1.6 11 -4.1 26 -3.3 18 -9.3 30.7 -12.4 22.3 -12.6 18.2 -18 24.6 -9.3 12.2 -7.7 8.6 -25.2 18.4 -27.7 19 -30.1 16.9 -25.3 7.1 -27.6 7 -8.9 2z"/>
<path fill="#626262" d="M444.5 460.6l-5 0.5 -23-2.3 -35.1-4.3 -7.9-1.1 -2-0.7 -32-16.2 -20-10.9 -6-6.1 -27.1-31 -2.9-3.1 -1-0.3 -1 0 -1 0.8 -3 1 -2 1.8 -1 0.2 -2 1.8 -1 0.2 -2 1.8 -1 0.2 -2 1.8 -1 0.2 -2 1.8 -1 0.2 -2 1.8 -1 0.2 -2 1.8 -1 0.2 -2 1.8 -1 0.2 -2 1.8 -1 0.2 -2 1.8 -1 0.2 -5 3.8 -1 0.2 -0.3-380.4 0.3-0.3 60-0.1 390.8 0.4 -1.8 2.8 -6 6 -1 2 -6 6 -1 2 -5 5 -1 1.9 -5 5.1 -1 1.9 -4 4.1 -1 1.9 -4.2 4.3 -0.3 1 -3.7 4 -0.3 1 -3.5 3.7 -0.5 1.3 -5.8 7 -0.3 1 -3.8 5 -2.1 4 0 2 15.5 19.1 9 13.6 4 7.3 8.5 24 6.5 30.5 1.8 10.5 -0.1 9 -0.4 4 -4.3 27.5 -4.5 24.5 -7.5 25.2 -14.7 26.8 -6.3 9.4 -16 22.3 -16.8 22.3 -5.2 6.2 -25.4 18.8 -32 22 -13.6 8 -13 7 -44 11.9 -21.1 5.1z"/>
<path fill="#646464" d="M441.5 459.6l-14.7-1.1 -31.3-3.5 -22-2.9 -4-1.5 -30-15.1 -21-11.4 -9-9.5 -28-32.3 -1-0.5 -1 0 -38 19 -0.3-370.3 0.3-0.3 60 0 390.3 0.3 -1.3 2.2 -6 6.1 -1 1.9 -6 6.1 -1 1.9 -5 5.1 -1 1.9 -5 5 -1 1.9 -4 4.1 -1 1.9 -4 4 -1 1.9 -3 3.1 -1.1 1.9 -2.9 3 -1.2 2 -5.1 6 -7.4 11 0.6 2 0.7 1 12.4 14.7 4 5.3 6 9.1 3.8 6.9 10.2 28.6 6 28.5 1.3 7.9 -0.6 16 -4.7 30 -4.5 24 -6.5 21 -17.3 31 -19.7 27.9 -21.4 28.1 -28.5 21 -33.7 23 -13.7 8 -7.7 4 -40 11z"/>
<path fill="#656565" d="M442.5 457.6l-3 0.4 -6-0.4 -21.9-2.1 -38.1-4.8 -4-1.2 -29.9-15 -22.1-11.9 -6-6.1 -19-21.9 -11-13.4 -2-1.7 -1-0.3 -0.6 0.3 -36.4 18.2 -0.3-367.2 0.3-0.3 60 0 389.4 0.3 -1 2 -6 6 -1.4 2.4 -5.6 5.6 -1 2 -5 5 -1.1 2 -5 5 -1.1 2 -4 4 -1.1 2 -4 4 -1.1 1.6 -23 23.6 -0.1 0.8 1 2 20.1 24.5 5 7.7 3 5.7 11.1 31.1 5.3 25 1.2 8 -0.6 20 -4.6 29 -4.7 25 -5 16 -18.7 33.7 -3.9 6.3 -13.1 18.3 -15 20.1 -8 10 -6.7 5.6 -19.2 14 -38.1 26.1 -7.8 4.9 -11.2 5.9 -40 11.1z"/>
<path fill="#676767" d="M442.5 455.6l-4 0.4 -22.5-1.5 -41.2-5 -4.3-0.7 -2-0.9 -30.7-15.4 -21.3-11.5 -4-3.9 -12-13.7 -21-25.6 -2-1.3 -2 0.3 -16 5.5 -1 0.7 -2 0.3 -3 1.7 -2 0.3 -3 1.7 -2 0.3 -3 1.7 -2 0.3 -0.3-358.8 0.3-0.3 60 0 377.4 0.3 -2.9 3 -1.1 2 -4.9 5 -1.1 2 -4.9 5 -1.1 2 -4.9 5 -1.1 2 -3.9 4 -1.1 2 -4 4 -1 2 -7 8 -1.1 2 -5 6 -4.1 6 -2.3 5 0.1 1 4 5 19 22.7 3 4.3 3 5.2 5 13.1 8.3 23.7 5.6 27 -0.7 26 -4.2 26.4 -5 26.6 -4 12.9 -10 18.4 -14.9 25.7 -16.1 22.2 -16 20.9 -11.3 9.9 -22.1 16 -32.3 22 -10.9 7 -6.4 3.4 -38 10.8z"/>
<path fill="#686868" d="M442.5 453.5l-3 0.5 -3-0.1 -32-2.2 -33-4.1 -4-1.3 -29.5-14.8 -22.5-12.1 -4-3.8 -13-15.1 -19-23.8 -1-1.1 -1-0.3 -3 0.5 -1 0.8 -2 0.3 -1 0.7 -2 0.3 -1 0.7 -2 0.4 -1 0.7 -5 1.5 -1 0.7 -2 0.3 -3 1.7 -2 0.3 -3 1.7 -2 0.3 -3 1.8 -2 0.3 -0.3-357.8 0.3-0.3 60 0 376.6 0.3 -2.9 3 -0.7 1.5 -5 5.1 -1 1.9 -5 5.1 -1 1.9 -5 5.1 -1 1.9 -4 4.1 -1 1.9 -4 4 -0.6 1.5 -7.8 9 -0.3 1 -5.8 7 -0.3 1 -3.8 5 -2.2 4 0.1 2 0.7 1 22 26.2 3 4 2.1 3.8 6.9 18.4 7.8 22.6 4.3 21 0.1 10 -0.8 21 -4.4 27 -5.2 27 -2.3 7 -11.5 21.4 -16.1 27.6 -14.9 20.5 -14 18.3 -16.4 14.2 -17.9 13 -26.3 18 -21.9 14 -16.4 5 -21.7 6z"/>
<path fill="#6a6a6a" d="M441.5 451.6l-3 0.4 -10-0.5 -30-2.1 -28-3.4 -4-1.4 -30.2-15.1 -21.8-11.7 -3-2.9 -9-10.4 -23-28.8 -2-2.2 -1-0.5 -1 0.1 -11 5.5 -8 2.9 -9 4 -1 0.1 -3 1.6 -2 0.6 -0.3-357.3 0.3-0.3 60 0 375.9 0.3 -2 2 -1.1 2 -4.9 5 -1.1 2 -4.9 5 -1.1 2 -4.9 5 -1.1 2 -3.9 4 -1.2 2 -4 4 -1.1 2 -7.1 8 -4.4 6 -1.9 2 -3.2 4.3 -4.5 4.7 -0.5 1 2.4 4 21.6 25.7 4 5.8 7 18.6 9 26.2 3.4 16.7 -0.1 16 -0.9 20 -4.4 26.3 -4.8 24.7 -1.6 5 -12.6 23.3 -17.4 29.7 -12.6 17.3 -13 17 -20.3 17.7 -16.5 12 -26.4 18 -19.8 12.5 -9.9 3.5 -24.6 7 -23.3 6z"/>
<path fill="#6b6b6b" d="M440.5 449.7l-20-0.7 -29-2.2 -22-2.5 -4.7-1.8 -31.9-16 -16.8-9 -3.6-2.3 -10-11.7 -24-30.1 -2-2.3 -1-0.6 -1.5 0 -32.5 16.1 -0.3-356.1 0.3-0.3 60 0 361.1 0.3 -0.3 1 -2.7 3 -0.3 1 -2.7 3 -0.3 1 -2.7 3 -0.3 1 -2.7 3 -0.3 1 -2.7 3 -0.3 1 -2.7 3 -0.3 1 -2.7 3 -0.3 1 -2.7 3 -0.3 1 -2.7 3 -0.3 1 -2.7 3 -0.3 1 -2.7 3 -0.3 1 -2.7 3 -0.3 1 -3.5 5 -2.3 5 0.9 2 4.1 5 20.9 25 2.9 4 2.2 3.8 6 16.1 8 23.1 2.6 8 1.5 7 0.6 5 -0.1 7 -1.3 33 -3.9 23 -4.4 22.6 -1.4 4.4 -3.6 7.8 -14 25.4 -14 23.6 -14 19.3 -10 12.7 -25.9 22.2 -27.1 19.1 -28 18.2 -15.4 5.7 -13.7 4 -26.4 7z"/>
<path fill="#6d6d6d" d="M439.5 447.7l-34-1.8 -36-3.5 -3-0.7 -8.7-4.2 -27.7-14 -18.6-10.4 -13-15.6 -22-27.6 -2.5-2.4 -2.4 0 -2.1 1 -7 2.1 -10 3.6 -3 1.5 -2 0.5 -6 2.5 -0.3-348.2 0.3-0.3 60 0 322.2 0.3 -1 2 -1.8 2 -1.2 3 -1.8 2 -1.2 3 -1.8 2 -1.2 3 -1.8 2 -1.2 3 -1.8 2 -0.9 2 0.1 1 -1 1 0 1 -1 2 -6.7 13 0.1 1.3 1 0.5 3.7-2.8 0.3-1 1.7-2 0.3-1 1.7-2 0.3-1 1.7-2 0.3-1 1.7-2 0.3-1 1.7-2 0.3-1 1.7-2 0.3-1 1.7-2 0.3-1 1.7-2 0.3-1 1.7-2 0.3-1 1.7-2 0.3-1 1.7-2 0.3-1 1.7-2 0.3-1 1.7-2 0.3-1 1.7-2 0.3-1 18.9 0 -33.5 50 -1 2 0.4 2 -0.8 2 1 1.3 1-0.1 1.3 2.8 22.7 27 5 7 3.2 6 1.8 4.5 9 25.4 6.1 19.1 0.7 5 -0.1 10 -1.4 35 -3.4 20 -4.1 21 -5.6 14 -14.2 25.9 -15.6 26.1 -17.4 23.7 -3 3.4 -7 6.3 -24.3 20.6 -25.7 17.9 -24 15.6 -20.4 7.5 -9.7 3 -26.4 7z"/>
<path fill="#6e6e6e" d="M438.5 445.5l-35-1.8 -35-3.5 -3-0.8 -8.1-3.9 -27.8-14 -16.1-8.8 -3-1.9 -14-16.8 -21-26.5 -1-1.1 -1-0.4 -1 0 -3.4 1.5 -4.6 1.2 -1.2 0.8 -1.8 0.3 -1 0.7 -5 1.5 -1 0.8 -2 0.2 -3 1.8 -2 0.3 -3 1.7 -2 0.3 -1 0.7 -0.3-347.3 0.3-0.3 60 0 314 0.3 -20.5 41 -0.2 1 0.7 0.3 3-2.2 0.3-1.1 1.8-2 0.2-1 1.8-2 0.2-1 1.7-1.6 0.1 1.6 -0.9 1 -1.1 3 -3.8 7 0.7 2 1 0.3 1-0.7 1 0.4 0 1.1 1 0.5 3.6-2.6 0.2-1 1.8-2 0.2-1 1.8-2 0.2-1 1.8-2 0.2-1 1.8-2 0.2-1 1.8-2 0.2-1 1.8-2 0.2-1 1.8-2 0.2-1 1.8-2 0.2-1 1.8-2 0.2-1 1.8-2 0.2-1 1.8-2 0.2-1 1.8-2 0.2-1 1.8-2 0.2-1 1.8-2 0.4-1.2 1.6-1.8 5.9 0 -0.2 1 -1.8 2 -1.2 3 -1.8 2 -1.2 3 -1.8 2 -1.2 3 -1.8 2 -1.2 3 -1.8 2 -1.2 3 -1.8 2 -1.2 3 -1.8 2 -10.2 20 0 1 0.4 1 5.3 4.7 5 5.5 15 17.8 5.9 8 6.7 13 9.4 26.8 5.7 18.2 -0.2 25 -1.4 27 -6.5 35 -7.7 19 -12.9 23.4 -15 25.2 -4.8 7.4 -12.2 16.2 -17 15.5 -21.9 18.3 -23 16 -21.1 13.6 -20 7.4 -15 5 -26.7 7z"/>
<path fill="#707070" d="M441.5 442.7l-3 0.5 -6-0.1 -32-1.8 -33-3.3 -4.1-1.5 -26.9-13.2 -26-14.1 -3-3 -8-9.7 -24-30.1 -2-2.3 -1-0.6 -1-0.3 -0.6 0.3 -14.2 7 -4.2 1.4 -3 1.7 -8 3.4 -0.3-222.5 0.3-124.2 373.5 0.2 -20.9 41 0 1 0.4 0.7 1 0.4 2-1.6 1 0.2 0.3 0.3 -0.8 2 1.2 2 1.3 0.6 1-0.2 1 1.7 1 0.2 1-0.6 0.6 0.3 0.4 1.5 0.7 0.5 2.3-1.4 0.7 0.4 -0.7 2.1 1 0.9 1-0.7 0.5 0.7 0.4 2 11.1 10.8 12.8 15.2 5.4 7 9.4 18 10.4 29.8 2.6 8.2 0.8 4 0.5 5 -0.2 16 -1.7 34 -5.7 30 -6.3 15.9 -5 11 -17 29.9 -13.7 22.2 -9.3 12.4 -19.3 17.6 -24 20 -20.2 14 -19.5 12.6 -19.8 7.4 -20.6 7 -18.8 5z"/>
<path fill="#717171" d="M439.5 440.7l-13-0.2 -22-1.2 -21.7-1.8 -17.3-2.1 -28.9-13.9 -27.1-14.6 -2-1.9 -7-8.4 -29-36.1 -3.5 0 -1.5 0.9 -1.4 0.1 -1.6 0.9 -1.4 0.1 -1.6 0.9 -1.4 0.1 -1.6 0.9 -1.2 0.1 -5.8 2.1 -9 3.9 0-340.2 373 0.2 -21 41 0.2 1 0.8 1.2 1 0.2 1.1-0.4 1.1 2 1.8 1.5 2 0.7 1 1.3 2 0.4 1 1.5 2 0.7 1 1.5 12 11 9.9 11.4 7.1 9 11.7 22 9.3 27 2.8 10 1 9 -0.1 9 -0.7 22.2 -1.4 20.8 -4.6 24 -8.1 20 -4.9 11 -13 23 -16 26.1 -8 11.3 -8 7.6 -14.6 13 -26.6 22 -17.4 12 -16.4 10.5 -22.6 8.5 -24.4 8.2 -14 3.8z"/>
<path fill="#737373" d="M442.5 437.5l-5 1 -27-1.1 -25.2-1.9 -20.8-2.5 -28.1-13.5 -27.9-15 -3-3.1 -9-10.9 -25-31.3 -2-0.5 -11 3.9 -4.2 1.9 -1.8 0.4 -1 0.8 -2 0.2 -3 1.8 -2 0.2 -3 1.8 0-339.4 372.3 0.2 -4.1 8 -1.6 2 -1.6 3.5 -1.3 1.5 -1.3 3 -1.7 2 -0.9 2 -0.1 1 -0.8 1 -0.1 1 -7.7 15 -0.2 1 2.1 2.4 2 0.5 1 1.4 9.4 6.7 13.6 12.6 5 5.4 8.1 10 3.9 6.5 10.6 20.5 9.6 28 1 5 1.5 15 -0.7 25 -1.7 25 -3.4 18 -8 20 -6.9 16 -6 10.8 -14 23.7 -14 21.7 -5.9 5.8 -14.3 13 -24.8 20.8 -13 10.2 -25 16.3 -22.8 8.7 -23.2 7.9 -13.2 4.1z"/>
<path fill="#747474" d="M439.5 435.7l-7 0.2 -22-0.8 -36-3 -10-1.2 -10-4.5 -24.1-11.9 -22.9-12.5 -3-3.1 -11-13.3 -22-27.8 -2-2.3 -1-0.5 -1-0.1 -17 8.8 -9 4.1 0-337.5 366.4 0.2 -1.7 2 -1.3 3 -1.7 2 -1.3 3 -1.7 2 -1.3 3 -1.7 2 -0.9 2 0.1 1 -7.9 15.8 -0.7 2.2 0.7 0.3 3-2.3 0.3-1 1.7-2 0.3-1 1.8-2 0.2-1 1.7-1.7 0.1 1.7 -0.9 1 -1.1 3 -3.8 7 0.6 2 2.1 1.7 2 0.8 7.1 5.5 5.5 5 13.4 12.5 7.9 9.5 6.1 10.7 10.9 21.3 6.2 18 2 7 2.4 23 -0.9 25 -1.7 24 -2.6 13 -7.8 20 -10.8 24 -14.7 25.2 -15 23.3 -5.1 5.5 -12 11 -27 23 -19.3 15 -18.6 12 -22 8.6 -22 7.6 -23 7.1z"/>
<path fill="#767676" d="M441.5 432.5l-5 0.9 -28-0.9 -24-1.7 -21-2.4 -29-13.8 -28-15.1 -4-4.3 -17-20.8 -17-22.4 -2-0.2 -2 0.3 -1 0.5 -3 0.2 -1 0.8 -3 0.2 -1 0.8 -3 0.2 -1 0.8 -3 0.2 -1 0.8 -3 0.2 -1 0.8 -2 0.1 0-327.4 343.9 0.2 -0.3 2 -1.7 3 -0.3 2 -1.7 3 -0.3 2 -0.7 1 -1.3 5 -0.8 1 -0.2 2 -0.8 1 -0.2 2 -0.8 1 -0.2 2 -0.8 1 -0.1 3 0.3 0.7 2 1.4 1.6-0.1 3.1-3 0.3-1 1.8-2 0.2-1 1.9-2 0.1-0.9 0.1 1.9 -4.7 9 0.6 1.7 1 0.3 3.4-3 0.3-1 1.8-2 0.2-1 2-2 0-1 1.3-0.6 0 0.6 -0.9 1 -1.1 3 -3.7 7 0.7 2 1 0.2 2-1.5 0.8 0.3 -0.6 2 1.3 2 10.5 8 22 20.7 5.1 7.3 14.9 28.4 2.5 5.6 5.5 17 3.2 27 -1 28 -2.4 27 -1.5 5 -7 18 -12.3 28 -13 22.4 -13.8 21.6 -11 12 -24.8 22 -27.4 21.9 -6.9 5.1 -10.1 6.6 -17.9 7.4 -22.1 8 -21.7 7z"/>
<path fill="#777777" d="M434.5 430.5l-15 0 -23-1.2 -25-2.3 -8-1 -2-0.6 -29-13.9 -27-14.6 -5-5.4 -17.1-21 -15.9-22 -1-0.2 -6 0.2 -2 0.7 -3 0.2 -1 0.7 -4 0.3 -1 0.7 -4 0.3 -1 0.7 -3 0.1 0-59.6 1-0.7 3-0.3 1-0.7 3-0.3 3.4-2.1 0.5-1 -0.9-1.3 -11 0 0-255.9 337.9 0.2 -0.1 1 -0.8 1.4 -0.2 1.6 -0.8 1.4 -0.2 1.6 -0.8 1.4 -0.2 1.6 -0.8 1.4 -0.2 1.6 -0.8 1.4 -0.2 1.6 -0.8 1.4 -0.2 1.6 -0.8 1.4 -0.2 1.6 -0.8 1.4 -0.2 1.6 -0.8 1.4 0 2.8 4 2.8 3 1.6 2 0.6 3 2.2 1 0.2 1-0.3 3 3.1 2 0.1 1 1.7 9.9 7.8 23.2 22 2.1 3 5.8 10.6 13 25.5 2 4.8 3.1 10.1 2.1 16 1.7 17 -1 25 -2.3 25 -1.4 5 -7.4 19 -13.7 31 -10.1 17.4 -13 20.5 -16.6 18.1 -14.6 13 -24.8 20.4 -24 17.8 -21.5 8.8 -25.5 9.1 -30 9.2 -9 2.4z"/>
<path fill="#797979" d="M427.5 427.5l-15 0 -16-0.8 -21-1.8 -14-1.8 -28.9-13.6 -28.1-15.2 -4-4.2 -15-18.5 -18-25.2 -2-0.6 -3 1 -3 0.2 -1 0.6 -3 0.3 -2 0.9 -3 0.1 -1 0.7 -4 0.3 -1 0.7 -3 0.2 0-56.4 1.7-0.9 2.3-0.1 1.7-0.9 2.3-0.1 2.9-2.9 1.1-0.4 0.4-1.6 -0.4-2.5 -1-1.3 -11 0 0-253.4 335.1 0.2 -8.9 26 0 2 2 2 12.8 6.8 2 0.7 3 2.3 2 0.8 14 12.4 16.7 16 3.3 4.2 3 5.3 9 17.1 8.6 17.4 1.8 5 1 5 2.4 19 1.6 18 -1 23 -1.9 20 -2.7 10 -3.8 10.1 -7.4 17.9 -8.2 18 -6.4 12.2 -16 25.6 -19 20.5 -10.5 9.7 -25.2 21 -25.3 18.8 -9 4.1 -17 6.7 -31 10.8 -28 8z"/>
<path fill="#7a7a7a" d="M438.5 423.6l-3 0.4 -14 0.4 -23-0.3 -21.6-1.6 -14.4-1.6 -2-0.5 -15.2-6.9 -16.3-8 -18.8-10 -7.7-4.7 -7.1-8.3 -7.8-10 -21.1-29.7 -2-0.3 -2 0.3 -1.2 0.7 -2.8 0.1 -1.5 0.9 -2.5 0.1 -1.5 0.9 -2.5 0.1 -1.5 0.9 -2.5 0.1 -1.5 0.9 -2.5 0.1 -1 0.7 0-50.3 3-0.9 2-0.2 1-1.4 3-0.3 1-1 3-1.5 0.2-1.2 -1.2-9 -1-1.3 -11 0 0-250.9 331.9 0.2 -0.3 2 -0.7 1 -0.3 2 -0.7 1 -0.3 2 -0.7 1 -0.3 2 -0.7 1 -0.3 2 -0.7 1 -0.3 2 -0.7 1 -1.3 5 -0.7 1 -0.2 3 1.6 2 17.2 9 4.8 3 8.1 7 17 16 3.6 4 5.3 7 11.7 22.2 7 14.4 1.8 4.4 2.7 19 2.4 27 -0.8 17 -1.4 17 -5 19 -12 29 -11.4 24 -13.6 22 -2.7 3.5 -10 11.1 -16.9 17.4 -25 21 -25.1 19 -14.3 7 -23.2 9 -23.8 8z"/>
<path fill="#7c7c7c" d="M436.5 420.5l-21 0.6 -21-0.3 -20.5-1.3 -12.5-1.4 -2-0.5 -15.7-7.1 -16.3-8 -16.9-9 -9.1-5.5 -13-16.6 -22-31 -1.9-1.9 0.3-1 -0.4-1.1 -11 0 -2 0.9 -3.7 0.2 -1.3 0.8 -3.7 0.2 -1.3 0.8 0-37 2-0.1 1-0.8 3-0.2 1-0.8 3-0.2 1-1 3-1.5 0.2-1.2 -1-3 0.4-1 0-1 -1.6-11.6 -1-1.3 -11 0 0-248.3 329 0.2 0 1 -1 2 0 1 -1 2 0 1 -1 2 0 1 -1 2 0 1 -4 11 0 2 0.5 1 0.8 1 18.9 10 6.1 4 20.7 19 4.4 5 8.1 11 10.5 20 5.3 11 1.9 5 1.4 5 1.9 14 1.7 16 1.1 16 -1.9 27 -6.3 24 -8.1 20 -7.7 17 -7.9 16 -10.4 17.1 -15.7 17.9 -18.6 19 -21.7 18.3 -23 17.4 -21.2 10.3 -15.2 6 -26.6 9z"/>
<path fill="#7d7d7d" d="M426.5 417.5l-21 0.3 -21-0.8 -23-1.9 -5-1.6 -13.5-6 -14.4-7 -15-8 -12.1-7.1 -5-5.9 -12-15.8 -20-28.6 -3-0.2 -9 1 -1 0.7 -4 0.3 -1 0.7 -4 0.3 -1 0.7 0-18.1 1.1 0 1.9-0.9 2.1-0.1 1.9-0.9 2.1-0.1 1.9-0.9 2.1-0.1 4-2 0.1-1 -10.2-0.2 -1 0.1 -1 0.8 -4 0.2 -1 0.8 0-4.5 1-0.8 3-0.2 1-0.8 3-0.2 1-0.8 3-0.2 3.8-2.2 0.2-1 -1-0.6 -7.1-0.4 3.1-0.6 1-1 2.7-1.4 0.3-0.7 -0.8-2.3 0.4-2 -2.6-19.3 -1-1.2 -11-0.1 0-245.6 326.1 0.2 -0.9 2 -0.2 1.7 -0.8 1.3 -0.2 1.7 -0.8 1.3 -0.2 1.7 -0.8 1.3 -0.2 1.7 -0.8 1.3 -0.2 1.7 -0.8 1.3 -0.2 1.7 -0.8 1.3 -0.2 1.7 -0.8 1.3 -0.1 2 0.5 1 0.8 1 18.7 10 8.9 6 4 3.3 13.5 12.7 4.2 5 10.4 14 11.9 23.1 2.9 6.9 3.1 11 2.3 18 2.2 29 -1.5 20 -7.1 27 -4.8 13 -7.1 16.3 -7.9 16.7 -6.8 13 -5.3 8.4 -19 21.6 -20.9 21 -19.3 16 -19.8 14.8 -14.5 7.2 -15.3 7 -19.2 7.1 -18.1 5.9 -18.9 5.4z"/>
<path fill="#7f7f7f" d="M435.5 413.5l-20 0.8 -20-0.1 -22-1.3 -13-1.2 -2-0.5 -15-6.5 -15-7.2 -15-8 -13-7.7 -15-19.2 -22-30.7 -1-0.5 -6 0 -2 0.9 -2.9 0.2 -1.1 0.8 -2.9 0.2 -1.1 0.8 -2.9 0.2 -1.1 0.8 -1 0.1 0-14.5 2-0.1 1-0.8 3-0.2 1-0.8 3-0.2 1-0.8 3-0.2 4-2.2 0.1-1.1 -1.1-0.5 -10-0.4 -1 0 -1.5 0.9 -3.5 0.1 -1 0.7 0-2.9 1-0.6 3-0.4 1.7-0.9 2.3-0.1 1.7-0.9 2.3-0.1 1-0.9 3-1.4 0.4-0.6 -0.4-2.1 -1-0.8 -0.9-0.1 1.4-2 0-1 -3.5-26 -1-1.3 -7 0 -3.1-0.7 2.1-0.1 1-1.1 3-0.3 1-0.9 3-1.5 0-2.1 -1-1.3 -10 0 0-234.8 322.7 0.1 -1.6 4 -0.1 1.4 -0.9 1.6 -0.1 1.4 -0.9 1.6 -0.1 1.4 -0.9 1.6 -0.1 1.4 -0.9 1.6 -0.1 1.4 -0.9 1.6 -0.1 1.4 -0.9 1.6 0 2 0.5 1 0.8 1 15.1 8 6.5 4 11 7.8 7.9 7.2 5.7 6 12.4 16.4 3.3 4.6 4.7 9 6.2 13 5.4 19 2.1 18 1.5 18 0.4 11 -0.7 10 -4.3 19 -6.5 22 -12.1 27.8 -7 14.1 -7 13.1 -7.3 9 -11.7 13.1 -11 11.6 -11.5 11.3 -6.4 6 -7.2 6 -22.9 17.6 -20.6 10.4 -22.9 10 -24.5 8.3 -16.3 4.7z"/>
<path fill="#808080" d="M422.5 410.5l-15 0.3 -16-0.2 -16-0.9 -15-1.4 -3-0.8 -13-5.5 -24-11.8 -14-7.7 -7-4.4 -19-24.8 -16.6-23.8 -1.4-2.5 -4-0.2 -7 0.4 -1 0.2 -1 0.7 -3 0.1 -1 0.2 -1 0.7 -3 0.1 0-7.9 2-0.1 1-0.7 3-0.3 1-0.7 3-0.3 1-0.7 3-0.3 4.4-2.7 -0.4-1.7 -4.1-0.3 -0.6-1 3.5-2 0.2-1 -0.6-1 0.4-3 -4-29 -0.8-4.8 -0.9-1.2 0-1 0.5-1 -0.6-4.8 -1-1.3 -10-0.1 0-231.9 318.8 0.1 0 1 -0.8 1 -0.2 2 -0.8 1 -0.2 2 -0.8 1 -0.2 2 -0.8 1 -0.2 2 -0.8 1 -0.2 2 -0.8 1 -0.2 2 -0.8 1 -0.2 3 0.6 1 0.9 1 15.1 8 4.8 3 15.8 11.2 5.4 4.8 7.6 9 14 19.1 7 13.1 2 4.7 1.6 5.1 5.4 20 2.8 28 0.8 17 -0.3 5 -5.6 24 -7.3 24 -11.4 25.6 -12 22.9 -4.8 6.5 -11.3 13 -11.1 12 -11.8 11.8 -15.3 14.2 -12.6 10 -10.1 7.4 -13 6.8 -14.3 6.8 -13.7 6 -14 5.5 -15 4.9 -16 4.6z"/>
<path fill="#828282" d="M426.5 406.5l-25 0.7 -25-1 -18-1.7 -8-3.2 -13-5.7 -13-6.4 -13-7 -12-7 -5-5.9 -11-14.4 -21-29.8 -1-0.3 -3 0.2 -1 0.6 -3 0.1 -4 0.8 -2 0.9 -3 0.1 -2 0.9 -2 0 0-6.2 2 0 1-0.8 3-0.2 1-0.8 3-0.2 1-0.8 3-0.2 4-2.8 0.8-0.9 -0.1-1 -0.7-1.7 -0.7-0.3 -0.2-1 0.5-1 -0.5-5 -6.1-45 -1-1.1 -10-0.1 0-228.9 279 0.1 0.6 3 0.4 11.2 1-0.4 2-3.1 0.4-2.7 0.6-0.6 0.7 0.6 0.2 7 0.6 1 2 0 0.5-1.1 0.6 0.1 1.1 2 2 0 0.3-0.8 1 1.3 1 0 1-1.3 0.7-0.2 1.1-2 0.2-1.6 0.8-1.4 0.2-1.6 0.8-1.4 0.2-1.6 0.8-1.4 0.2-1.6 0.8-1.4 0.4-2 13.7 0 -0.9 1.8 -0.1 1.2 -0.9 1.8 -0.1 1.2 -0.9 1.8 -0.1 1.2 -3.9 10.9 0.2 2.1 2 2 18.1 10 22.3 16 4.4 5.1 12.1 15.9 8.5 12 2.6 5 1.8 4 3 9 6.2 23 2.5 27 0.6 14 -0.4 5 -2 10 -3.9 15.7 -8.1 26.3 -9.9 22 -10 19.2 -11 14.8 -11.6 13 -11.4 12 -12 11.7 -12.5 11.3 -16.5 12.9 -13 7 -15 7.3 -15 6.7 -15 6 -11.7 4.1 -17.3 5.1z"/>
<path fill="#838383" d="M428.5 402.5l-17 0.8 -18 0 -18-0.8 -17-1.5 -13-5.2 -16-7.4 -17-8.8 -14-8.3 -8-9.8 -12-16.1 -11-15.7 -5.7-9.2 -1.2-4 0-2 -0.8-3 -3.3-24.1 -3.7-28.9 -0.3-7.2 -0.7-0.8 -4.1-2 -2.2-0.1 -1.8-0.9 -2.2-0.1 0-217 266.5 0.1 0 12 0.5 0.5 1-0.4 2-3.2 0.3-2.9 1.1-1 0.6-3.1 0.6 4.1 0 7 1 1 1.5 0 1.7-3 1.2-0.4 0.2 3.4 0.7 1 2.1 0.3 0.6-0.3 0.4-1.1 1-0.2 0.8 2.3 17.2 4.6 5 2.1 15.8 8.3 22.8 16 5.4 4.8 4.1 5.2 12 16 8.8 13 6.1 19 5.4 21 2.2 26 0.2 8 -0.4 5 -1.2 9 -3 13 -4.2 15.2 -5 15.8 -2.6 7 -4.4 9.8 -11 21.7 -15 20.5 -16 17.7 -11 11.1 -11 10.3 -13.6 11.9 -7.4 5.7 -11.3 6.3 -13.8 7 -13.9 6.4 -14 5.9 -16 6 -14 4.6 -5 1.4z"/>
<path fill="#858585" d="M406.5 399.5l-25-0.4 -24-2 -12-4.8 -13-5.8 -14-7 -13-7.2 -8-5 -8-9.9 -18-24.6 -10-17.2 -2-9.8 -5-36.9 -0.8-8.4 -0.4-10 -0.8-1.2 -4-1.9 -2-0.1 -5-1.3 0-215.6 255.8 0.1 0.2 9.1 0.2-1.1 0.8-0.8 0.3-3.2 0.7-0.8 0.3-3.2 6.8 0 0 12 0.8 1 2.5 0 1.6-3 1-0.1 0.2 3.1 0.8 1 3 0.5 1-0.6 2 1.3 4 0.8 16 4.9 13 5.1 8.9 5 19.7 14 8.4 7.6 2.9 3.4 16.1 22 5.1 9 6.5 21 4.9 20 1.7 25 -2.2 21 -3 12.8 -3.7 13.2 -4.3 13.7 -4.5 12.3 -11.2 23 -11.1 16 -11.7 15 -18.5 19.5 -21 19.5 -11 9.2 -4.4 2.8 -17.6 9.4 -18 8.6 -18 7.5 -19 6.9 -13 3.8 -12 1.2z"/>
<path fill="#868686" d="M403.5 395.5l-25-0.4 -14-1 -8-1 -13.9-5.6 -13.2-6 -13.9-7.1 -14-7.9 -4-2.4 -2-2 -15-19.4 -9-13.7 -10-17.3 -1-3.4 -1-5.8 -4.2-31 -0.8-8 -0.7-20 -4.3-2.4 -3-0.3 -1-0.7 -3-0.3 -1-0.7 0-208.7 253.8 0.1 0 11 1.2 1 1-0.6 2-3.7 0.2-2.7 0.8-1 0.3-3 0.8-1 3.6 0 0 12 0.8 1 3.5 0.6 1-0.5 1.4 0.9 5.6 1.2 14 3.8 18.7 7 6.3 3.2 19.5 13.8 12 11 2.5 3 13.2 18 6.9 13 6.4 21 4.8 21 1.1 17 -1.1 14 -1.8 14 -2.9 12 -4.3 15 -4.4 13 -4.9 13 -7 14.2 -15.1 21.8 -13.5 17 -10.4 11 -11.3 11 -10.7 9.8 -11 9.3 -14.1 8.9 -17.5 9 -17.4 7.9 -17.9 7.1 -17.5 6 -4.6 1.3 -10 1.3 -11 1z"/>
<path fill="#888888" d="M412.5 390.6l-14 0.7 -12 0 -16-0.8 -14-1.3 -10-3.8 -12-5.1 -23-11.6 -14-8.1 -3-2.8 -8.1-10.3 -6.9-10 -10-15.9 -8-14 -1-3 -1-5.5 -3.9-29.6 -1.1-32.5 -4.4-2.5 -2.6-0.2 -1.4-0.8 -2.6-0.2 -2-0.9 0-202 252.5 0.1 0 11 0.8 1 1.7 0.3 1.2-0.3 2.2-4 0.3-3 0.8-1 0.3-3 1-1 1.5 0 0 12 0.8 1 12.9 2.7 8.3 2.3 6.2 2 13 5 11.5 5.7 14.2 10.3 12.1 11 5.8 6 10.1 14 8.8 17 2.4 7 3.6 13 5.1 23 0.4 7 -0.5 9 -1.2 13 -1.7 13 -2.1 9.5 -4.8 16.5 -4.7 14 -5.5 14.1 -4 8 -13 19.3 -8.7 11.6 -8.9 11 -13.4 14.2 -12 11.4 -13 11.4 -13 8.7 -12.4 7.3 -13.6 6.8 -16 7.1 -16 6.2 -19 6.3z"/>
<path fill="#898989" d="M399.5 386.5l-24 0 -12-0.7 -8-0.9 -14-5.4 -13-5.8 -14-7.1 -12.7-7.1 -6.3-4.1 -8-10.5 -13-19.3 -13-22.2 -1-2.7 -1-5.2 -3-22.8 -1-36.2 -1-1.9 -4-1.9 -2.9-0.2 -1.1-0.8 -3-0.2 -1-0.8 -1 0 0-200.3 250.9 0.1 0 11 0.9 1 3.2 0.6 1-0.1 0.6-0.5 1.4-3 0.9-1 0.1-2.4 1-1.3 0.7 0.7 0.1 7 0.6 1 17.2 4 6.5 2 10.6 4 6.9 3 11.4 5.7 7.5 5.3 12.3 11 11.3 11 6.8 10 5.9 11 5.3 11 2.9 9 3.4 13 2.8 13 1 7 -1.5 23 -3.3 23 -3.2 12 -4.2 13 -4.7 13 -4.3 10.4 -3.1 5.6 -6.9 10.6 -14 19.3 -8.1 10.1 -8.7 10 -12.2 12 -13 11.7 -4 3.4 -9 6 -21.6 12.9 -12.4 6.1 -15 6.6 -14 5.3 -15 5.1 -18 2.5z"/>
<path fill="#8b8b8b" d="M400.5 381.5l-23 0.3 -22-1.5 -12-4.3 -13-5.6 -12.1-5.9 -12.9-7.2 -10-6.3 -4-5 -15-21.7 -8-13 -7-12.4 -1-2.5 -1-4.6 -2-15.9 -1.4-46.4 -0.6-0.8 -4-2 -2.8-0.2 -1.2-0.8 -2.8-0.2 -1.2-0.8 -2-0.1 0-194.2 218 0.1 0.1 3 2 6 0.5 1 1.4 1.4 1.1-0.4 0.1-11 25.5 0 0 11 0.8 1 6.5 0.9 2-2.2 0.7 0.3 0.7 2 13.3 3 6.8 2 15.4 6 16.2 8 4.9 3 15.6 14 11.4 11.4 8.4 14.6 7.8 16 1.3 3 1.7 6 4.2 17 1.3 7 0.8 10 -0.5 11 -1.1 12 -3.6 23 -6 20 -7.3 19.3 -8.7 15.7 -8.1 12 -8.2 11.1 -10 12.4 -11.1 12.5 -18.1 17 -4.8 4 -9 6.2 -21 12.8 -13.2 7 -11.8 5.3 -15 6 -16 5.5 -17 2.6z"/>
<path fill="#8c8c8c" d="M398.5 376.5l-22 0.3 -21-1.4 -13-4.6 -12.5-5.3 -12.5-6.2 -13-7.3 -9-5.7 -5-6.2 -8-11.2 -7-10.7 -14-23.9 -1-2.4 -1-4.1 -1-10 -1-26.3 -0.4-29 -0.6-0.9 -1.6-1.1 0.6-1 0.8 0 -0.8-1 -2-1 -2-0.2 -1-0.8 -2-0.2 -1-0.8 -2-0.2 -1-0.8 -2-0.2 -1-0.8 0-183.1 204.6 0.1 1 1 0.3 4 0.8 1 0.3 2 0.8 1 0.2 1.7 2 1.8 1.3-0.5 0-12 6.2 0 0.3 4 0.8 1 0.2 2 0.8 1 0.3 2 2.1 2.1 1 0 0.8-0.1 1.2-1 0-11 21.3 0 0.1 11 0.5 1 8.1 1.4 2-0.1 8.4 1.7 8.2 2 5.9 2 9.8 4 10.4 5 7.6 4 6.7 4.2 17.2 15.8 8.8 9.8 7.4 13.2 6.8 14 3 7 4.3 17 1.1 8 1 12 0 6 -1.2 14 -1.6 12 -2.1 12 -1.3 6 -3 10 -4.2 12 -2.9 7 -5.6 11 -6.3 11 -14.4 20.3 -10 12.4 -10 11.2 -7.8 8.1 -10.2 9.3 -16.5 11.7 -19.5 11.8 -12 6.4 -12.3 5.8 -13.7 5.4 -14 4.9 -18 3z"/>
<path fill="#8e8e8e" d="M392.5 371.5l-21 0 -12-0.8 -5-0.7 -13-4.6 -14-6 -13.7-6.9 -13.3-7.8 -6-4.2 -9-12 -13-19.8 -11-19.4 -1-2.6 -0.7-5.2 -1.3-26.2 -0.5-25.8 1-14 -0.5-0.9 -2-1.5 -2-1 -13-4.1 0-177.5 196.9 0 0.1 1 1.2 1 0.3 4 0.9 1 0.3 2 0.9 1 0.3 2 2.1 1.8 1-0.2 0.7-0.6 0.3-7.1 1 0.8 0.1 1.3 1 1 0.2 2 2.3 2 2.6 0 1.1-1 0.1-12 3.7 0 0.3 4 0.8 1 0.2 2 0.8 1 0.3 2 2.5 2.4 1 0.1 4-0.5 1.5-1 0-11 10.5 0 0 11 1.7 1 19.3 3 9.2 2 7.1 2 7.3 3 12.3 6 16.1 9.6 13.5 12.4 11.1 13 6.7 12 6.7 14 3.7 9 2.2 9 1.8 14 0.9 14 -0.3 8 -1.4 13 -1.6 11 -2.3 11.6 -1.8 7.4 -4.8 14 -7.1 15 -11.4 20 -13.9 19 -15.4 18 -16.6 16.7 -9.8 7.3 -11.2 7.6 -11 6.8 -11.8 6.6 -11.9 6 -12.3 5.5 -9 3.6 -11 3.8 -21 3.4z"/>
<path fill="#8f8f8f" d="M400.5 365.5l-11 0.6 -12 0.2 -22-1.3 -10-3.2 -11-4.3 -11-5 -10-5.2 -11.7-6.8 -7.3-4.9 -8-10.6 -8-11.7 -8-12.9 -4.8-8.9 -4.2-9.4 -0.7-3.6 -0.5-6 -1.3-40 2-23 -0.5-0.8 -4-2.5 -15-5 0-91.2 50.8 25.5 2.2 0.8 0.7-0.8 -7.7-8.8 -1-0.3 -3-2.7 -1-0.3 -3-2.7 -1-0.3 -3-2.7 -1-0.3 -3-2.7 -1-0.3 -3-2.7 -1-0.3 -3-2.7 -1-0.3 -3-2.7 -1-0.3 -3-2.7 -1-0.3 -3-2.7 -1-0.3 -3-2.7 -1-0.3 -3-2.7 -1-0.3 -1-0.9 0-62 185.3 0 0.6 1 0.1 2.2 0.9 1.8 0.1 2.2 0.9 1.8 0.1 1.2 1.6 3.8 1.4 1.1 0.4-1.1 0-6 0.6-0.9 1.1 0.9 0.3 2 0.9 1 0.3 2 2.4 2.1 1.1-0.1 0.9-0.9 0.2-1.1 0.8-1 3 2.4 3.1-0.4 1.9-1.3 2 1 4.6-0.7 1-1 0-11 0.4-1 0.5 4 1.5 2 1.1 4 2.9 2.8 10-0.5 14.6 1.7 11.8 2 16.2 4 3.4 1.2 11.9 5.8 19.1 11.4 4.3 3.6 5 5 14.5 17 4.1 7 5.6 11 4.5 10.2 2.5 6.8 2.5 17 1 12 0.3 11 -1 11 -1.5 11 -3.8 19 -1.8 7 -2.2 6.1 -5.9 12.9 -6.3 12 -7.6 13 -6 9 -8.2 10.8 -8.5 10.2 -9.1 10 -9.4 9.4 -7.9 6.6 -6.1 4.5 -19.1 12.5 -12.9 7.4 -13.2 6.6 -13.8 6.1 -14 5.4 -17 3.4z"/>
<path fill="#919191" d="M388.5 360.5l-20-0.1 -12-0.8 -3-0.6 -13.1-4.5 -13.9-5.8 -14-7.2 -13-7.7 -4-2.6 -2-2 -13-17.9 -7.3-11.8 -8.7-17.9 -2-4.7 -1-4.3 -1.5-33.1 0.3-9 2.7-27 -2.5-2.9 -2-1 -1.4-0.1 -1.6-0.9 -1.4-0.1 -1.6-0.9 -1.4-0.1 -1.6-0.9 -1.4-0.1 -1.6-0.9 -1.4-0.1 -1.6-0.9 -2-0.4 0-81.9 1 0.4 2 1.5 48.6 24.3 0.5 0 1.9-1.5 2-3.5 1.9-2 0.3-1 -0.5-1 -14.3-14 -1.4-0.7 -8.1-7.3 -1.9-1 -4.1-4 -1.9-1 -4.1-4 -1.9-1 -4.1-4 -1.9-1 -4.1-4 -1.9-1 -4.1-4 -1.9-1 -2-1.9 0-49.1 179.8 0 0.8 1 0.2 2 0.8 1 0.2 2 0.8 1 0.2 2 0.8 1 0.2 2 0.8 1 0.3 2 2.1 1.6 2-1.1 2 1 1-0.1 1.6-0.4 1.4-1.2 2 0.9 1-0.1 4-0.9 2 0.1 12-1.4 2-0.4 1-0.8 1 0 2 1.1 9 0.2 11 1.1 9.4 1.4 9.2 2 17.4 5.1 17.6 9.9 12.2 8 11.2 12 10.6 13 4.4 8 5 10.4 2.6 6.6 3 10 1.7 12 1.1 12 0.2 17 -1.5 13 -2.3 13 -2.8 12 -1.9 6 -8 18 -5.8 11 -6.4 11 -7.2 11 -5.7 7.6 -8 9.8 -8 9 -9 9.2 -5.1 4.4 -10.9 8.7 -8 5.7 -11.9 7.6 -12.3 7 -19.8 9.7 -19 7.5 -12 2.8 -10 1.8 -12 1.4z"/>
<path fill="#929292" d="M389.5 354.5l-18 0.2 -17-1.2 -12.6-4 -12.4-5 -12.5-6 -12.5-7 -10-6.6 -7-8.9 -5.1-7.5 -4.9-8.2 -10-19.8 -4-9.1 -1-3.5 -1.3-24.4 0.3-10.9 3.7-34.1 -0.1-3 -0.4-1 -3.8-2 -1.4-0.1 -1.6-0.9 -4.4-1.1 -1.6-0.9 -1.4-0.1 -1.6-0.9 -4.4-1.1 -1.6-0.9 -1.4-0.1 0-64.8 45.5 22.9 2.5 0.9 0.3-0.9 -2.3-2.9 -1-0.3 -5-3.7 -1-0.3 -2-1.8 1-0.8 1 0.2 11 5.7 1 0.1 2-1.6 4.9-6.6 1.9-3 0.3-1 -0.4-1 2.3-0.9 0.6-2.1 -4.8-5 -1.8-2.4 -2-1.4 -6-5.7 -2-1.1 -3-2.9 -2-1.1 -3-2.9 -2-1.1 -3-2.9 -2-1.1 -3-2.9 -2-1.1 -3-2.9 -2-1.1 -3-2.9 -2-1.1 -3-2.9 -2-1.1 -3-2.9 -2-1.1 -3-2.9 -3-2 0-41.5 176.3 0 0 1 0.8 1 0.2 2 0.8 1 0.2 2 0.8 1 0.2 2 0.8 1 0.2 2 0.8 1 0.3 2 2.6 2.1 24-3.4 10-0.7 21 1.4 14.8 2.6 11.1 3 11.1 3.6 14.7 8.4 13.1 9 9.5 10 9.8 12 3.6 5 4 8 4.3 11 3.5 11 1 4 1.2 9 1.1 14 0.1 13 -0.3 6 -1.7 12 -3.5 16 -4 12 -3.4 8.4 -5.7 11.6 -6.3 11.5 -7 11.3 -7 10.2 -7.2 9 -8.8 10 -7 7.3 -6.4 5.7 -10.6 8.7 -11 8.1 -9.6 6.2 -10.3 6 -19.1 9.6 -19 7.7 -11 2.8 -12 2.3 -12 1.7z"/>
<path fill="#949494" d="M378.5 348.5l-11-0.1 -12-0.7 -12-3.5 -12-4.6 -12-5.5 -12-6.6 -11-7 -2-1.5 -3-3.8 -10-15.3 -8-14.7 -7-15 -3-7.8 -1.1-19.9 2.1-25.8 3.4-28.2 -0.4-1.2 -26-13.1 0-34.9 40 20 1.4-0.8 0.1-1 -2.5-2.6 -11-7 -7-5.1 -3-1.4 -2-1.6 -3-1.4 -2-1.6 -3-1.4 -2-1.7 -3-1.3 -2-1.9 -1-0.3 0-5.7 46 23 1 0.1 2.2-2.1 0.3-1 -0.2-1 1.7-1.1 2-2.4 10-13.9 2.1-3.6 1.9-2 0.3-1 -0.3-0.9 -1.9-2.1 1.9-0.6 1 0.7 1 0 1.1-1.1 -11.1-11.7 -1-1.9 -2-2.1 -2-1 -3-3 -2-1 -3-3 -2-1 -3-3 -2-1 -3-3 -2-1 -3-3 -2-1 -3-3 -2-1 -3-3 -2-1 -3-3 -2-1 -3-3 -2-1 -3-3 -2-1 -4-3.6 0-24.7 86.4 0 0.2 1 1.8 2 0.2 1 1.8 2 0.2 1 1.8 2 0.2 1 1.8 2 0.2 1 1.8 2 0.2 1 1.8 2 0.2 1 1.8 2 0.2 1 1.8 2 0.2 1 1.8 2 0.2 1 1.8 2 0.2 1 1.8 2 0.2 1 1.8 2 0.2 1 1.8 2 0.2 1 5.4 5 1 0.1 0.2-1.1 -0.9-2 -2.8-5 -1.1-3 -0.8-1 -0.1-1 0.5-0.5 1.5 1.5 0.2 1 3.3 4.3 4 3.5 1-0.1 0.1-0.7 -20.7-41 14.2 0 1.8 2 1.2 3 1.8 2 1.2 3 1.8 2 1.2 3 1.9 2 0.2 1 1.9 2 0.2 1 1.8 2 0.2 1 1.8 2 0.2 1 4.9 5 1.3 0.8 1-0.9 1.2 0.1 0.8-1.3 1-0.5 3-0.1 2-1.8 1 0.2 1-2.4 1-0.1 0.2-1 -0.2-2 -0.7-1 -0.3-2 -0.7-1 -0.3-2 -0.7-1 -0.3-2 -0.7-1 -0.3-2 -0.7-1 -0.3-2 -0.7-1 -0.3-2 -0.7-1 -0.3-2 -0.7-1 -0.1-1 26.5 0 0.4 2 0.9 1.5 0.1 1.5 0.9 1.5 0.1 1.5 0.9 1.5 0.1 1.5 0.9 1.5 0.1 1.5 0.9 1.5 0.1 1.5 3.9 2.3 29-4.1 6-0.1 15.6 0.9 9.7 1 9.4 2 13.6 4 9.7 3.4 14 8.6 13 9.2 8 8.8 8.1 10 4.9 7 2.2 5 3.8 9.5 3.2 9.5 2.5 9 0.9 6 1.1 13 0.2 13 -0.4 10 -1.7 11 -1.9 8 -3.6 12 -4 11 -3.5 8 -5.6 11 -6.4 11 -7.2 11 -7.6 10.5 -7 8.4 -7.5 8.1 -8.6 8 -9.5 8 -10.5 8 -10.9 7.4 -9.3 5.6 -10.7 5.7 -11.1 5.3 -11.9 5 -13.8 4 -11.2 2.4 -12 1.9 -11 1.1z"/>
<path fill="#959595" d="M382.5 341.5l-13 0.2 -13-0.6 -13-3.4 -12-4.4 -11-5.1 -12-6.6 -10.8-7.1 -2.2-1.6 -3-3.7 -6-8.8 -5-8.2 -8-15.1 -8-18.1 -1.1-3.5 -0.5-8 1.6-24.9 3.2-28.1 3.7-14 -0.5-1 -3.4-2.8 -1-0.3 -2-1.7 -1-0.3 -2-1.7 -1-0.3 -2-1.6 -1-0.3 -5-3.6 -1-0.3 -2-1.7 -3-1.3 -2-1.7 -3-1.3 -1-0.9 0-15.6 38 18.9 1-0.2 2-2.5 1.2-1.8 0-1 -3.2-3.3 -1-0.2 -2-1.8 -1-0.2 -2-1.8 -1-0.2 -2-1.8 -1-0.3 -2-1.8 -1-0.2 -2-1.9 -1-0.2 -2-1.8 -3-1.2 -2-1.8 -3-1.2 -2-1.9 -3-1.2 -2-2 -1 0 -1-1 -1 0 -1-1.3 -2-1.1 0-2.3 45 22.8 1 0 2.3-2.3 24.3-34 3.4-3 2-3 4.1-4 0.3-1 -2.2-5 -3.7-5 -0.3-1 -5-6 -1-2 -3-3 -1-2 -3-3 -1-2 -4-4 -1-2 -4-4 -1-2 -5-5 -1-2 -5-5 -1.2-2.2 -5.7-5.8 -1.3-2.2 -5.7-5.8 -1.1-2 -0.9-1 56.6 0 1.8 2 0.2 1 1.8 2 0.2 1 1.8 2 0.2 1 1.8 2 0.2 1 1.8 2 0.2 1 1.8 2 0.2 1 1.8 2 0.2 1 1.8 2 0.2 1 1.8 2 0.2 1 1.8 2 0.2 1 1.8 2 0.2 1 3.8 5 0.2 1 1.8 2 0.2 1 5.1 4.7 0.9-0.7 -0.6-1 0.4-1 2.3 1.8 1.1 0.2 0.9-1.8 0.5-0.2 0.1-1 -0.8-2 0.2-1 3 2.7 1 0.4 1.2-2.1 0.1-1 -0.5-1 -7.9-16 1.1-1.1 1.1 1.1 0.3 1 1.2 1 5.1 8 4.3 4.1 -1-3 -5.5-11.1 -0.4-1 0.9-0.4 1.5 1.4 0.2 1 1.8 2 0.3 1 1.8 2 0.4 1.2 5 4.9 1 0.4 1-1.3 1-0.1 1-0.7 1 0.5 1-0.1 14-5.7 1-0.8 1.8-0.3 1.2-1.2 1.2 0.2 0.8-1.3 1-0.4 1 0.2 1-2.3 1.4-0.2 0.6-1 0-1.4 -2.9-7.6 -0.1-1.4 -0.9-1.6 -0.1-1.4 -0.9-1.6 -0.1-1.4 -0.9-1.6 -0.1-1.4 -0.9-1.6 6.8 0 6.1 19 3 2.1 26.4-4.1 6.6-0.6 29 1.5 9.6 2.1 13 4 11.1 4 12.8 8 12.7 9 8.9 10 8.8 12 3 5 4.5 11 3.1 9 2.6 9 0.9 4 0.9 8 0.6 11 0 11 -0.7 11 -1.1 6 -2.7 10.6 -3.2 10.4 -3.8 10.5 -4.1 9.5 -5.7 11 -6.2 10.5 -7 10.5 -7.5 10 -6.6 8 -5.8 6 -9.1 8.5 -9 7.7 -9 6.9 -9.9 6.9 -10.1 6.3 -9 5 -10 4.9 -11.1 4.8 -13.9 4.4 -10.9 2.6 -10.1 1.8 -11 1.4z"/>
<path fill="#979797" d="M378.5 334.5l-11 0.1 -11-0.6 -7-1.6 -9-2.7 -11-4.3 -11-5.2 -11-6.3 -10-6.8 -2-1.7 -5-6.8 -9-14.5 -8-15.6 -6.3-15 -1.2-5 0.1-9 1.4-20.5 2.4-21.5 6.7-26 7.4-13 0.1-1 -3.6-3.8 -1-0.3 -5-3.7 -1-0.3 -10.2-7.9 1.2 0 21 10.7 1.9-0.7 24.1-33.3 4-4.5 17-17.1 0.3-1.1 -0.1-1 -2-4 -3.8-5 -0.2-1 -2.8-3 -0.2-1 -2.7-3 -0.3-1 -3.2-3.3 -0.8-1.7 -3.7-4 -0.5-1.3 -4-4.1 -1-1.9 -4-4.1 -1-2 -5-5 -1-2 -5-5 -1-2 -5-5 -0.7-1.6 -2.9-3 37.1 0 0.9 1 0.3 1 1.7 2 0.3 1 1.7 2 0.3 1 1.7 2 0.3 1 1.7 2 0.3 1 1.7 2 0.3 1 1.7 2 0.3 1 1.7 2 0.3 1 1.7 2 0.3 1 1.7 2 0.3 1 1.7 2 0.3 1 1.7 2 0.3 1 1.7 2 0.3 1 1.7 2 0.3 1 1.7 2 0.3 1 5.3 5 1 0 0.1-1 -0.7-1 0.6-0.8 2 1.7 1 0.3 1-1.8 2 0.2 1-1.2 1.1-0.4 0.9-1.8 2 0.3 1-1.3 1-0.2 0.9-2 -0.1-1 -1.3-3 0.5-0.3 1 0.1 4 3.3 1-1.8 1-0.3 1-1.2 2 0.8 32-12.8 21.3-3.8 14.7-2.1 24.2 1.1 9.8 1.3 16.2 4.7 9.8 3.4 3.5 1.6 12.5 8 11.9 9 9.9 12 8.8 13 3.4 8 3.5 10 2.6 9 1.8 8 1.1 17 -0.2 9 -0.9 9 -0.9 6 -2.4 10 -2.6 9 -3.5 10 -3.6 9 -4.3 9 -5.6 10.1 -6.2 9.9 -6.8 9.6 -7 8.8 -7.8 8.6 -7.2 7 -8 7.1 -9 7.2 -9 6.6 -9.4 6.1 -9.6 5.7 -10 5.2 -14 6.2 -10 3.2 -10 2.7 -19 3.5z"/>
<path fill="#989898" d="M385.5 326.6l-15 0.5 -14-0.6 -15-3.9 -15-5.8 -15-7.9 -14-9.4 -2-2.1 -4-5.6 -7-11 -6-11.1 -4.8-10.2 -5-16 -0.5-5 1.2-21 2-18 7.2-27 2.5-7 3.3-7 0.1-2.9 2.3-2.1 24.7-34.2 28.7-28.8 0.3-0.7 7-4.3 1.2-1 0.8-1.7 2 0.1 1-1.5 2-0.3 1-1.1 2-0.6 6-4.1 4-2.1 1-1.1 1.2-0.6 0.8-1.7 2 0.4 3-1.8 32-12.2 19.2-3.7 15.8-2.4 18 0.8 13 1.5 12.4 3.1 15 5 8.6 5.1 11.5 7.9 6.4 5 4.3 5 7.8 10.2 6.9 10.8 4 10 3.1 10 2.8 12 0.8 7 0.1 11 -0.9 13 -1.7 11 -2.5 10 -3.8 12 -4.8 12 -5.2 11 -5.7 10 -7.1 10.8 -7.7 10.2 -8.8 10 -8.9 9 -10.6 9.3 -11 8.5 -11 7.4 -11 6.6 -12 6.1 -10 4.4 -12 4 -12 3.1 -12 2.2z"/>
<path fill="#9a9a9a" d="M385.5 318.5l-15 0.7 -14-0.6 -13-3.2 -12-4.2 -8.2-3.7 -8.8-4.7 -8-5 -8-5.7 -4-4.7 -6-8.9 -6.3-11 -4.2-10 -5.5-16.6 -1.6-6.4 -0.3-3 0.9-15.9 1.3-12.1 5.7-23.1 5-17.1 2-5.5 7-11.3 15-21.1 4-5 7-7.2 21-20.5 14.7-10.2 17.1-11 19.4-8 15.8-5.8 17.6-3.2 16.4-2.3 14 0.6 14 1.7 13 3 12.4 4 7.3 4 7.8 5 9.4 7 4.1 3.7 9 11.3 7.1 11 2.5 5 3.8 11 2.6 10 1.6 10 0.3 11 -0.6 11 -1.3 10 -1.9 10 -3.5 12 -4.6 12.1 -5 10.9 -5.4 10 -7.1 11 -7.5 10 -8.6 10 -8.8 9 -9.6 8.7 -10 7.9 -10 6.9 -11 6.7 -12 6.3 -10 4.4 -11.6 4.1 -11.4 3.2 -12 2.4z"/>
<path fill="#9b9b9b" d="M378.5 310.5l-12 0.3 -10-0.6 -13-3 -12-4.2 -14-6.8 -13.7-8.7 -5.3-4.1 -6-8.3 -6-11.1 -5.4-12.5 -4.7-14 -3.1-13 0.6-13 1.6-8.9 5-20.9 6-20.4 5.3-10.8 3.7-6.7 12-17.3 4-4.7 27-26.8 16.6-11.5 15.4-10 16.8-7 17.2-6.5 20-3.5 14-1.8 8 0 15.5 1.8 12.5 2.6 11.1 3.4 7.6 4 8.1 5 7.2 5 6.2 5 7.4 9 6.4 9.3 4.3 7.7 2.9 8 2.9 11 2 12 0.4 8 -0.4 11 -1.4 12 -2.3 11 -3.3 11 -4.3 11 -4.8 10.3 -6 10.7 -6.7 10 -7.6 10 -7.9 9 -8.9 9 -9.9 8.7 -10 7.7 -10 6.7 -11 6.3 -11 5.5 -11 4.5 -11.1 3.6 -11.9 3 -12 2z"/>
<path fill="#9d9d9d" d="M374.5 301.5l-13 0 -8-0.9 -12-2.9 -11-4 -12-6 -11-7.1 -7-5.6 -4.6-6.5 -6.1-11 -5.3-12.3 -4.8-14.7 -3.3-14 0-3 0.6-4 3.4-17 4.1-16.3 3.5-11.7 6.5-13.6 7-13.5 5-8.1 3-3.8 14.6-15 13.4-13 17.3-12 14.7-9.6 17.8-7.4 16.2-6.2 21-3.3 15-1.3 8 0.1 16 2.4 11.7 3.3 8.7 4 6.6 3.6 9.6 6.4 6.2 5 6.8 8 5.4 7.6 5.5 9.4 1.9 5 3 10 2.2 11 1 9 -0.2 10 -1.2 12 -2.1 11 -2.8 10 -4.3 11.5 -4.9 10.5 -5.6 10 -6.6 10 -7.6 10 -7.8 9 -8.5 8.5 -9 7.9 -10 7.6 -10 6.6 -10 5.7 -11 5.4 -11 4.4 -11 3.5 -11 2.7 -11 1.7z"/>
<path fill="#9e9e9e" d="M376.5 291.5l-11 0.2 -8-0.5 -11-2 -10-3.1 -10-4.3 -9-5 -10-7.1 -4-3.3 -2-2.2 -7-11.6 -5.5-12.1 -5.4-16 -1-4 -0.8-6 -0.7-8 0.4-4.7 4-18.7 3-11.5 1.4-4.1 8.4-18 9.2-17.3 2-3 8-9.7 9.4-10 9.6-9.4 15.1-10.6 16.9-11 19.2-8 15.8-5.7 19-2.5 12-0.8 14 0.6 11 1.9 13 4.4 8 4 7 4 5 3.3 4.7 3.8 6.9 8 6.3 9 4.5 8 2.6 7 2.5 9 1.8 10 0.7 9 -0.3 9 -1.2 11 -2.1 10 -3 10 -3.8 10 -4.6 9.6 -5.3 9.4 -5.9 9 -6.8 9 -7 8.1 -8 8.1 -8 7.2 -9 6.9 -10 6.7 -12 6.9 -9 4.5 -9 3.8 -10 3.3 -10 2.6 -10.8 1.9z"/>
<path fill="#a0a0a0" d="M379.5 280.5l-10 0.6 -10-0.4 -10-1.5 -10-2.8 -10-4.1 -9-5 -9-6.3 -7-6.2 -7-11.6 -5.5-12.7 -2.6-9 -2-13 -0.9-12 0.4-5 3.6-16 4-10.2 7-15.2 8.2-15.6 6.8-8.9 9-10.7 11-11.9 15.8-11.5 15.3-10 17.6-7 18.3-6 4-1 13-1.4 16-0.1 9 0.9 10 2 14 5.1 7 3.7 7.5 4.8 4.5 4 5.6 6 5.2 7 4.3 7 2.4 5 2.6 8 1.9 8.3 1.2 8.7 0.4 8 -0.5 9 -1.3 9 -2 9 -2.8 9 -4 10 -4 8.3 -4.9 8.7 -5.1 7.7 -5.5 7.3 -7.5 8.7 -7 7.1 -7 6.3 -8 6.3 -8 5.5 -11 6.7 -8.3 4.4 -9 4 -8.7 3.2 -9 2.6 -9 1.9z"/>
<path fill="#a1a1a1" d="M380.5 268.6l-11 0.7 -10-0.3 -9-1.3 -9-2.4 -9-3.6 -9-4.9 -8.9-6.3 -7.1-6.5 -5-8.2 -3.8-9.3 -3-11 -2-12 -0.9-11 0.1-11 0.9-4 4.6-12 6.1-13.6 7-13.8 8-10.6 10.1-12 7.3-8 2.2-2 15.2-11 15.5-10 9.9-4 13.8-4.8 12-3.6 6-1.1 14-0.3 10 0.6 14 2.6 10.1 3.6 6.9 3.1 4.8 2.9 5.8 5 5 5 5 6 4 6 2.8 5 2.7 7 1.9 7.1 1.4 7.9 0.6 8 -0.1 7 -0.9 8.5 -1.6 8.5 -2.4 8.8 -3 8.2 -4 9 -3.7 7 -4.9 8 -5 7 -5.4 6.6 -6 6.4 -7.3 7 -7.7 6.4 -17 11.9 -8 4.5 -8 3.8 -8.6 3.4 -8.4 2.6 -9 2.1z"/>
<path fill="#a3a3a3" d="M380.5 255.5l-10 0.8 -11-0.3 -9-1.3 -8-2.2 -8-3.3 -8-4.6 -7-5.2 -7-6.8 -4-6.8 -3.4-8.3 -2.5-9 -1.7-10 -0.8-8 -0.1-7 1.6-11 1.9-8 5-11.7 5.7-11.3 9.3-12.5 11-13 5-5.5 6.4-5 12.7-9 12.7-8 9.7-4 12.1-4 10.4-2.2 11-1.5 7-0.6 4.4 0.3 11.6 1.8 8.3 2.2 5.7 2.5 6.4 3.5 5.9 4 3.5 3 4.8 5 4.7 6 3.7 6 2.2 5 2.3 7 1.5 7 0.9 7 0.2 7 -0.5 7 -1.2 8 -1.9 8 -2.3 7 -3.2 7.7 -4.7 9.3 -4.3 7.1 -5 7.1 -5.6 6.8 -5.8 6 -15.1 13 -6.5 5 -7 4.6 -7 3.9 -7 3.3 -7 2.8 -8 2.5 -8 1.8z"/>
<path fill="#a4a4a4" d="M369.5 241.5l-8 0 -7.4-1 -7.6-2 -7-2.8 -7-3.9 -6-4.5 -6.1-5.8 -3.8-5 -3.1-6.8 -2.3-7.2 -1.9-9 -0.4-6 0.5-9 1.5-10 2.6-11 3.3-10 3.5-6 6.5-9 7.7-9.5 8-8.8 17.3-12.7 7.9-5 7.5-4 7.3-2.5 11-2.8 10-1.8 9-1 7 0.4 8 1.1 8 1.9 4 1.5 6 3.1 5 3.2 5.1 3.9 4.1 4 2.8 3.3 3.1 4.7 2.3 5 2.2 6 1.5 6 0.9 6 0.4 6 -0.3 7 -0.9 7 -1.6 7 -2.2 7 -2.4 6 -3 6 -4.8 8 -8 11 -12.2 12.9 -5.9 5.1 -6.1 4.6 -13.5 8.4 -6.5 3.1 -7 2.8 -7 2.1 -7 1.6 -7 0.9z"/>
<path fill="#a6a6a6" d="M375.5 223.6l-8 0.7 -7-0.4 -7-1.3 -6-2.1 -6-2.9 -6-4.2 -5.3-4.9 -4.9-6 -1.8-3.3 -1.9-6.7 -0.9-6 -0.3-7 0.4-7 0.9-7 1.8-7.9 1.9-6.1 4.2-8 5.8-9 6.1-8 6.2-7 10.8-8 14-8.1 8-3.7 7-2.7 13-2.3 7 0 8.2 0.8 6.8 1.4 7 2.2 4.5 2.4 4.4 3 6.1 5.6 3 4 2.6 4.4 1.9 4 1.7 5 1 5 0.6 5 -0.4 10 -1.9 10 -3.9 11 -5.2 10 -8.4 12 -8 8.8 -8.4 7.2 -9.6 6.3 -11 5.2 -12 3.8z"/>
<path fill="#a7a7a7" d="M376.5 201.7l-5 0.5 -5-0.1 -5-0.7 -4-1.1 -4-1.7 -4-2.4 -4-3.3 -3-3.4 -2.7-4 -2.3-4.7 -1.1-3.3 -0.6-4 0-6 0.7-6.7 0.8-3.3 2-5 2.9-6 3.7-6 4.3-6 4.3-5.1 6-5.8 11.5-7.1 11.5-5 9-1.6 6-0.3 6 0.5 5 1 5 1.6 5.2 2.8 5.3 5 4.1 6 2.5 6 1.2 7 -0.1 8 -1.3 7 -2.7 8 -3.6 7 -4.6 6.4 -7 7.7 -6.8 5.9 -7.2 4.6 -7 3.3 -6 2z"/>
</g>
<polygon points="256.5,221.5 267.4,188.8 280.1,164.0 295.2,136.1 315.6,110.7 341.1,88.6 359.5,76.6 384.7,61.8 413.7,51.8 428.3,47.0 447.2,43.5 468.8,41.8 491.2,41.8 512.8,43.5 531.7,47.0 546.3,51.8 575.3,61.8 600.5,76.6 618.9,88.6 644.4,110.7 664.8,136.1 679.9,164.0 692.6,188.8 703.5,221.5 708.3,254.5 707.0,286.7 700.2,317.4 691.9,353.8 679.6,381.9 662.8,405.9 632.5,438.5 614.5,455.1 594.2,466.0 555.4,486.0 506.4,497.0 453.6,497.0 404.6,486.0 365.8,466.0 345.5,455.1 327.5,438.5 297.2,405.9 280.4,381.9 268.1,353.8 259.8,317.4 253.0,286.7 251.7,254.5" fill="none" stroke="#ff0000" stroke-width="5" stroke-linejoin="round"/>
</svg>
<!-- status -->
<svg class="abs" style="left:0;top:650px" width="1002" height="42" viewBox="0 650 1002 42" font-family="Liberation Sans, sans-serif" font-size="10" font-weight="bold" fill="#c6c6c6">
<text x="382.3" y="669.1" textLength="22.5" lengthAdjust="spacingAndGlyphs">size:</text>
<text x="407.8" y="669.1" textLength="17.7" lengthAdjust="spacingAndGlyphs">960</text>
<text x="429.5" y="669.1" textLength="5.0" lengthAdjust="spacingAndGlyphs">x</text>
<text x="438.2" y="669.1" textLength="17.5" lengthAdjust="spacingAndGlyphs">540</text>
<text x="459.1" y="669.1" textLength="28.8" lengthAdjust="spacingAndGlyphs">zoom:</text>
<text x="491.6" y="669.1" textLength="26.3" lengthAdjust="spacingAndGlyphs">1.000</text>
<text x="541.8" y="669.1" textLength="29.2" lengthAdjust="spacingAndGlyphs">(Maya</text>
<text x="575.0" y="669.1" textLength="46.5" lengthAdjust="spacingAndGlyphs">Software)</text>
<text x="365.3" y="680.9" textLength="33.8" lengthAdjust="spacingAndGlyphs">Frame:</text>
<text x="401.8" y="680.9">1</text>
<text x="432.2" y="680.9" textLength="34.2" lengthAdjust="spacingAndGlyphs">Render</text>
<text x="469.7" y="680.9" textLength="26.7" lengthAdjust="spacingAndGlyphs">Time:</text>
<text x="499.1" y="680.9" textLength="21.0" lengthAdjust="spacingAndGlyphs">0:02</text>
<text x="543.9" y="680.9" textLength="40.9" lengthAdjust="spacingAndGlyphs">Camera:</text>
<text x="588.5" y="680.9" textLength="27.7" lengthAdjust="spacingAndGlyphs">persp</text>
</svg>
</body></html>
